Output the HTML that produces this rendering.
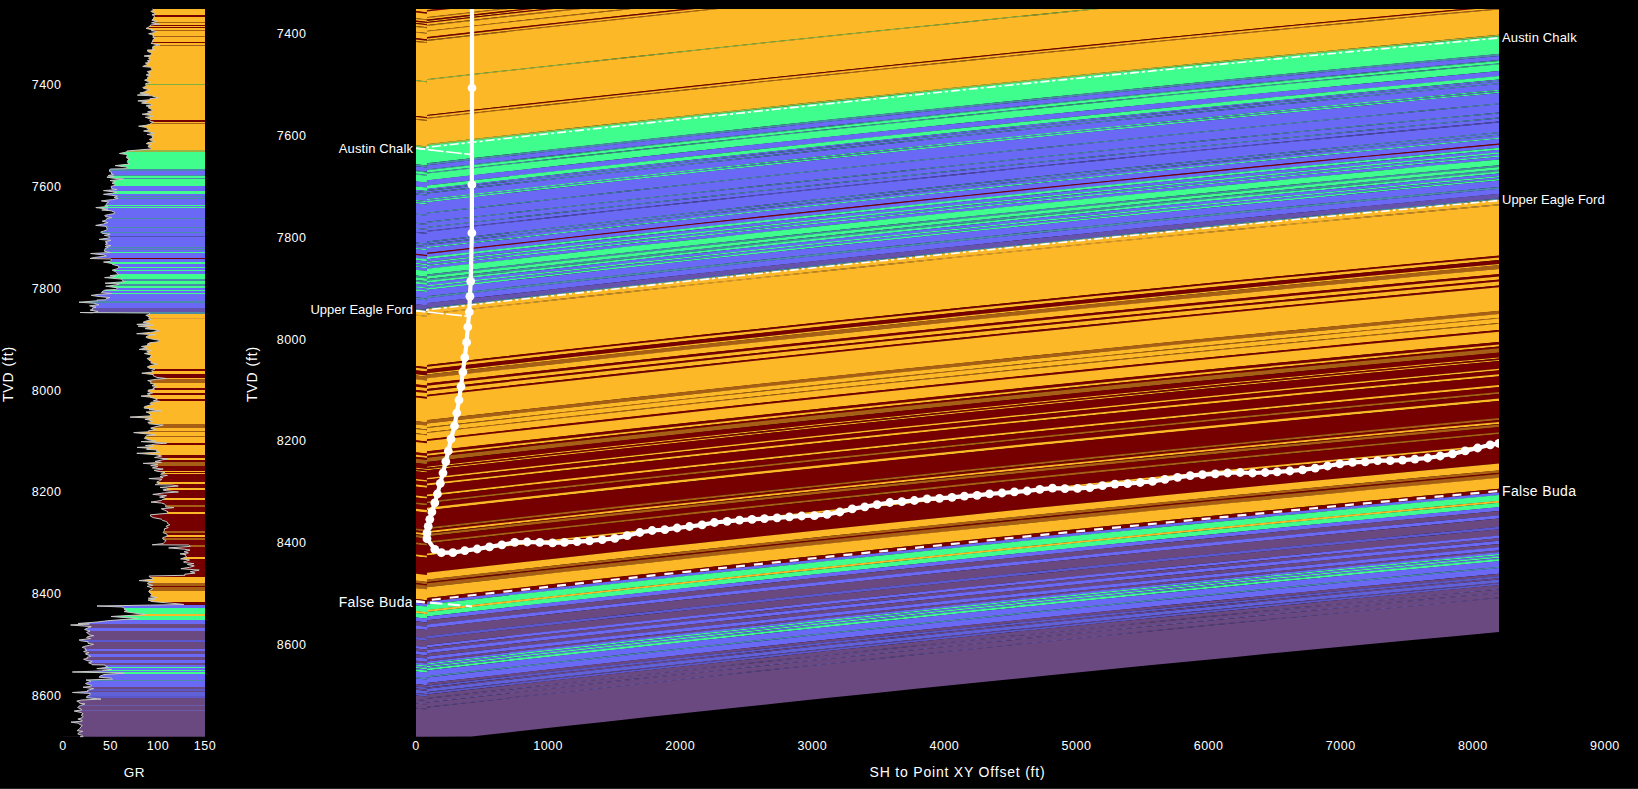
<!DOCTYPE html>
<html><head><meta charset="utf-8"><style>
html,body{margin:0;padding:0;background:#000;width:1638px;height:789px;overflow:hidden}
svg{position:absolute;left:0;top:0;display:block}
text{font-family:"Liberation Sans", sans-serif;fill:#fff}
</style></head><body>
<svg width="1638" height="789" viewBox="0 0 1638 789">
<rect x="0" y="0" width="1638" height="789" fill="#000"/>
<defs><clipPath id="cl"><rect x="63" y="9" width="142" height="727.7"/></clipPath>
<clipPath id="cm"><path d="M416,9 L1499,9 L1499,632.1 L1454.3,636.2 L1409.7,640.3 L1365,644.5 L1320.3,648.8 L1275.7,653 L1231,657.4 L1186.3,661.7 L1141.7,666.1 L1097,670.5 L1052.3,675 L1007.7,679.5 L963,684 L918.3,688.6 L873.7,693.2 L829,697.8 L784.3,702.5 L739.7,707.3 L695,712 L650.3,716.8 L605.7,721.7 L561,726.5 L516.3,731.5 L471.7,736.4 L427,736.8 L416,736.8 Z"/></clipPath></defs>
<g clip-path="url(#cl)" shape-rendering="crispEdges"><rect x="63" y="9" width="142" height="6.2" fill="#FDB827"/><rect x="63" y="15" width="142" height="1.6" fill="#760000"/><rect x="63" y="16.5" width="142" height="5.7" fill="#FDB827"/><rect x="63" y="22" width="142" height="1.1" fill="#A65F14"/><rect x="63" y="23" width="142" height="1.6" fill="#FDB827"/><rect x="63" y="24.5" width="142" height="1.5" fill="#760000"/><rect x="63" y="25.8" width="142" height="1.1" fill="#FDB827"/><rect x="63" y="26.8" width="142" height="1.3" fill="#760000"/><rect x="63" y="28" width="142" height="2" fill="#FDB827"/><rect x="63" y="29.8" width="142" height="1.3" fill="#A65F14"/><rect x="63" y="31" width="142" height="4.8" fill="#FDB827"/><rect x="63" y="35.6" width="142" height="1" fill="#A65F14"/><rect x="63" y="36.5" width="142" height="5.7" fill="#FDB827"/><rect x="63" y="42" width="142" height="1.5" fill="#760000"/><rect x="63" y="43.4" width="142" height="1.5" fill="#FDB827"/><rect x="63" y="44.8" width="142" height="1.1" fill="#A65F14"/><rect x="63" y="45.8" width="142" height="38.4" fill="#FDB827"/><rect x="63" y="84" width="142" height="1.1" fill="#7FB040"/><rect x="63" y="85" width="142" height="35.6" fill="#FDB827"/><rect x="63" y="120.4" width="142" height="1.3" fill="#760000"/><rect x="63" y="121.6" width="142" height="1.9" fill="#FDB827"/><rect x="63" y="123.3" width="142" height="1.1" fill="#A65F14"/><rect x="63" y="124.3" width="142" height="25.9" fill="#FDB827"/><rect x="63" y="150" width="142" height="1.6" fill="#A0B040"/><rect x="63" y="151.5" width="142" height="17.6" fill="#40FE8E"/><rect x="63" y="169" width="142" height="2.1" fill="#4A8CA8"/><rect x="63" y="171" width="142" height="4.2" fill="#6A69F5"/><rect x="63" y="175" width="142" height="1.1" fill="#4A8CA8"/><rect x="63" y="176" width="142" height="2.5" fill="#40FE8E"/><rect x="63" y="178.3" width="142" height="1.1" fill="#4A8CA8"/><rect x="63" y="179.3" width="142" height="6.8" fill="#40FE8E"/><rect x="63" y="186" width="142" height="5.2" fill="#6A69F5"/><rect x="63" y="191" width="142" height="3.6" fill="#40FE8E"/><rect x="63" y="194.4" width="142" height="1.2" fill="#6A69F5"/><rect x="63" y="195.5" width="142" height="1.1" fill="#4A8CA8"/><rect x="63" y="196.5" width="142" height="1.6" fill="#6A69F5"/><rect x="63" y="198" width="142" height="1.1" fill="#4A8CA8"/><rect x="63" y="199" width="142" height="5.7" fill="#6A69F5"/><rect x="63" y="204.5" width="142" height="1.1" fill="#40FE8E"/><rect x="63" y="205.5" width="142" height="1.1" fill="#6A69F5"/><rect x="63" y="206.5" width="142" height="1.3" fill="#40FE8E"/><rect x="63" y="207.7" width="142" height="10.5" fill="#6A69F5"/><rect x="63" y="218" width="142" height="1.1" fill="#4A8CA8"/><rect x="63" y="219" width="142" height="8.2" fill="#6A69F5"/><rect x="63" y="227" width="142" height="1.1" fill="#4A8CA8"/><rect x="63" y="228" width="142" height="4.2" fill="#6A69F5"/><rect x="63" y="232" width="142" height="1.1" fill="#4A8CA8"/><rect x="63" y="233" width="142" height="3.1" fill="#6A69F5"/><rect x="63" y="236" width="142" height="1.1" fill="#5050B0"/><rect x="63" y="237" width="142" height="9.7" fill="#6A69F5"/><rect x="63" y="246.5" width="142" height="1.1" fill="#4A8CA8"/><rect x="63" y="247.5" width="142" height="1.6" fill="#6A69F5"/><rect x="63" y="249" width="142" height="1.1" fill="#4A8CA8"/><rect x="63" y="250" width="142" height="2.3" fill="#6A69F5"/><rect x="63" y="252.2" width="142" height="1.1" fill="#40FE8E"/><rect x="63" y="253.2" width="142" height="5" fill="#6A69F5"/><rect x="63" y="257.8" width="142" height="1.5" fill="#760000"/><rect x="63" y="259" width="142" height="3.1" fill="#6A69F5"/><rect x="63" y="262" width="142" height="2.1" fill="#40FE8E"/><rect x="63" y="264" width="142" height="2.8" fill="#6A69F5"/><rect x="63" y="266.6" width="142" height="1.5" fill="#40FE8E"/><rect x="63" y="268" width="142" height="2" fill="#6A69F5"/><rect x="63" y="269.8" width="142" height="1.3" fill="#40FE8E"/><rect x="63" y="271" width="142" height="2.8" fill="#6A69F5"/><rect x="63" y="273.6" width="142" height="5.8" fill="#40FE8E"/><rect x="63" y="279.3" width="142" height="1.8" fill="#4A8CA8"/><rect x="63" y="281" width="142" height="2.8" fill="#40FE8E"/><rect x="63" y="283.7" width="142" height="2.1" fill="#4A8CA8"/><rect x="63" y="285.6" width="142" height="2" fill="#40FE8E"/><rect x="63" y="287.5" width="142" height="2.6" fill="#6A69F5"/><rect x="63" y="290" width="142" height="1.5" fill="#40FE8E"/><rect x="63" y="291.3" width="142" height="1.8" fill="#6A69F5"/><rect x="63" y="293" width="142" height="1.5" fill="#40FE8E"/><rect x="63" y="294.4" width="142" height="6.6" fill="#6A69F5"/><rect x="63" y="300.8" width="142" height="2" fill="#4A8CA8"/><rect x="63" y="302.7" width="142" height="5.2" fill="#6A69F5"/><rect x="63" y="307.7" width="142" height="4.7" fill="#6452AC"/><rect x="63" y="312.2" width="142" height="1.5" fill="#4A8CA8"/><rect x="63" y="313.5" width="142" height="4.7" fill="#FDB827"/><rect x="63" y="318" width="142" height="1.1" fill="#E0A030"/><rect x="63" y="319" width="142" height="50.3" fill="#FDB827"/><rect x="63" y="369.2" width="142" height="2" fill="#760000"/><rect x="63" y="371" width="142" height="2.8" fill="#FDB827"/><rect x="63" y="373.6" width="142" height="4" fill="#760000"/><rect x="63" y="377.5" width="142" height="1.3" fill="#FDB827"/><rect x="63" y="378.7" width="142" height="4" fill="#A65F14"/><rect x="63" y="382.5" width="142" height="5.3" fill="#FDB827"/><rect x="63" y="387.6" width="142" height="2.5" fill="#760000"/><rect x="63" y="390" width="142" height="3.3" fill="#FDB827"/><rect x="63" y="393.2" width="142" height="2.1" fill="#760000"/><rect x="63" y="395.1" width="142" height="4" fill="#FDB827"/><rect x="63" y="399" width="142" height="2" fill="#760000"/><rect x="63" y="400.8" width="142" height="23.6" fill="#FDB827"/><rect x="63" y="424.3" width="142" height="3.3" fill="#A65F14"/><rect x="63" y="427.5" width="142" height="4" fill="#FDB827"/><rect x="63" y="431.3" width="142" height="1" fill="#A65F14"/><rect x="63" y="432.1" width="142" height="4.3" fill="#FDB827"/><rect x="63" y="436.3" width="142" height="1" fill="#A65F14"/><rect x="63" y="437.2" width="142" height="6.3" fill="#FDB827"/><rect x="63" y="443.3" width="142" height="2" fill="#760000"/><rect x="63" y="445.2" width="142" height="10.3" fill="#FDB827"/><rect x="63" y="455.3" width="142" height="2.7" fill="#760000"/><rect x="63" y="457.9" width="142" height="2.1" fill="#FDB827"/><rect x="63" y="459.8" width="142" height="2" fill="#760000"/><rect x="63" y="461.7" width="142" height="4.5" fill="#A65F14"/><rect x="63" y="466" width="142" height="4.8" fill="#760000"/><rect x="63" y="470.7" width="142" height="1.1" fill="#FDB827"/><rect x="63" y="471.7" width="142" height="1.6" fill="#760000"/><rect x="63" y="473.2" width="142" height="1.1" fill="#FDB827"/><rect x="63" y="474.2" width="142" height="8.1" fill="#760000"/><rect x="63" y="482.1" width="142" height="1.6" fill="#FDB827"/><rect x="63" y="483.6" width="142" height="4.2" fill="#760000"/><rect x="63" y="487.6" width="142" height="2" fill="#FDB827"/><rect x="63" y="489.5" width="142" height="9" fill="#760000"/><rect x="63" y="498.4" width="142" height="2.1" fill="#FDB827"/><rect x="63" y="500.3" width="142" height="5.2" fill="#760000"/><rect x="63" y="505.3" width="142" height="2" fill="#A65F14"/><rect x="63" y="507.2" width="142" height="4.7" fill="#760000"/><rect x="63" y="511.7" width="142" height="2.7" fill="#FDB827"/><rect x="63" y="514.2" width="142" height="17.2" fill="#760000"/><rect x="63" y="531.3" width="142" height="2.1" fill="#A65F14"/><rect x="63" y="533.2" width="142" height="2" fill="#760000"/><rect x="63" y="535.1" width="142" height="2" fill="#FDB827"/><rect x="63" y="537" width="142" height="0.9" fill="#760000"/><rect x="63" y="537.7" width="142" height="2.6" fill="#A65F14"/><rect x="63" y="540.2" width="142" height="5.2" fill="#760000"/><rect x="63" y="545.3" width="142" height="2.1" fill="#A65F14"/><rect x="63" y="547.2" width="142" height="10.2" fill="#760000"/><rect x="63" y="557.3" width="142" height="2.1" fill="#FDB827"/><rect x="63" y="559.2" width="142" height="17.4" fill="#760000"/><rect x="63" y="576.5" width="142" height="6.9" fill="#FDB827"/><rect x="63" y="583.2" width="142" height="2.7" fill="#A65F14"/><rect x="63" y="585.8" width="142" height="1.4" fill="#760000"/><rect x="63" y="587" width="142" height="3.9" fill="#A65F14"/><rect x="63" y="590.8" width="142" height="11" fill="#FDB827"/><rect x="63" y="601.6" width="142" height="3.9" fill="#760000"/><rect x="63" y="605.4" width="142" height="2.8" fill="#6A69F5"/><rect x="63" y="608" width="142" height="5.9" fill="#40FE8E"/><rect x="63" y="613.7" width="142" height="2" fill="#FDB827"/><rect x="63" y="615.6" width="142" height="4.5" fill="#40FE8E"/><rect x="63" y="620" width="142" height="3.9" fill="#6A69F5"/><rect x="63" y="623.8" width="142" height="4.6" fill="#6A4880"/><rect x="63" y="628.2" width="142" height="3.3" fill="#6A69F5"/><rect x="63" y="631.4" width="142" height="8.5" fill="#6A4880"/><rect x="63" y="639.7" width="142" height="2.6" fill="#5A58D0"/><rect x="63" y="642.2" width="142" height="6.4" fill="#6A4880"/><rect x="63" y="648.5" width="142" height="2.6" fill="#6A69F5"/><rect x="63" y="651" width="142" height="2.8" fill="#6A4880"/><rect x="63" y="653.6" width="142" height="3.3" fill="#6A69F5"/><rect x="63" y="656.8" width="142" height="3.4" fill="#6A4880"/><rect x="63" y="660" width="142" height="3.4" fill="#6A69F5"/><rect x="63" y="663.2" width="142" height="1.9" fill="#6A4880"/><rect x="63" y="665" width="142" height="2.1" fill="#6A69F5"/><rect x="63" y="667" width="142" height="1.4" fill="#40FE8E"/><rect x="63" y="668.2" width="142" height="1.4" fill="#6A69F5"/><rect x="63" y="669.5" width="142" height="1.4" fill="#40FE8E"/><rect x="63" y="670.8" width="142" height="1.4" fill="#6A69F5"/><rect x="63" y="672" width="142" height="2.1" fill="#40FE8E"/><rect x="63" y="674" width="142" height="5.9" fill="#6A69F5"/><rect x="63" y="679.7" width="142" height="1.4" fill="#4A8CA8"/><rect x="63" y="681" width="142" height="5.8" fill="#6A69F5"/><rect x="63" y="686.6" width="142" height="2.5" fill="#6A4880"/><rect x="63" y="689" width="142" height="2.1" fill="#5A58C8"/><rect x="63" y="691" width="142" height="1.4" fill="#6A4880"/><rect x="63" y="692.3" width="142" height="3.4" fill="#6060D8"/><rect x="63" y="695.5" width="142" height="0.9" fill="#6A4880"/><rect x="63" y="696.2" width="142" height="1.9" fill="#5A58C8"/><rect x="63" y="698" width="142" height="3.6" fill="#6A4880"/><rect x="63" y="701.5" width="142" height="0.9" fill="#6A5AA8"/><rect x="63" y="702.3" width="142" height="3.1" fill="#6A4880"/><rect x="63" y="705.2" width="142" height="0.9" fill="#6A5AA8"/><rect x="63" y="706" width="142" height="4.4" fill="#6A4880"/><rect x="63" y="710.3" width="142" height="0.9" fill="#6A5AA8"/><rect x="63" y="711" width="142" height="25.9" fill="#6A4880"/></g>
<path d="M0,9 L152.4,9 L154.2,10.2 L150.8,11.3 L153.6,12.8 L155.8,14 L152,14.8 L154.4,15.6 L154.3,16.8 L153.7,18 L153.3,19.1 L151.8,20.2 L156.8,21.4 L151.5,22.8 L159.1,24.2 L151.1,24.9 L149.7,25.9 L148.9,27.1 L146,28.4 L153.8,30 L151.3,30.7 L156.6,31.5 L154.4,32.6 L148.6,33.7 L151.6,34.6 L154.2,36.1 L152.7,37.1 L155.3,38 L153.1,39.5 L152.7,40.8 L152.3,42.3 L151.1,43.3 L154.9,44.2 L160.1,44.9 L153.8,46.1 L152.2,47.2 L153.9,48.3 L152,49.1 L154.5,49.8 L147.4,50 L147.8,51.5 L150.3,52.5 L152,53.5 L150.9,55.1 L144.1,56 L150.2,56.7 L148.4,58.3 L150.5,59.9 L147.3,60.7 L149.7,62.3 L145.4,63 L148,64.4 L144.9,65.4 L142.7,66.5 L151.8,67.3 L151.1,68.7 L152,69.7 L151.8,70.5 L147.3,71.6 L148,72.4 L150.2,73.4 L146.2,74.9 L150.4,76 L147.5,77.2 L147.9,77.9 L147.5,79 L144.6,80.2 L148,81.4 L150.2,82.6 L145.6,83.7 L145.9,84.8 L146.3,86.3 L142.8,87.5 L143.6,88.4 L150,89.7 L147.2,90.5 L144.1,92.1 L139.8,93.1 L148.7,94.2 L137.4,95.1 L151.9,95.8 L155.2,97 L158.4,97.8 L149.9,98.7 L150.1,99.7 L137.9,100.9 L146.9,101.6 L141.6,103.1 L150.7,104.1 L152.3,105 L146.1,105.8 L150.1,106.8 L148.3,107.8 L151.1,109 L152.8,110.5 L147.5,111.9 L152,112.9 L142.2,114.2 L151.4,115.6 L153,116.3 L145.4,117.3 L148,118.1 L150.7,119.3 L149.9,120.3 L150.1,121.4 L153.6,122.1 L151.2,123.1 L150,124.3 L146,125.3 L138.6,126.2 L146.2,127.4 L146.8,128.3 L149.5,129.7 L143.6,131 L148.2,131.8 L154.6,133.1 L147.1,134.4 L154,135.7 L151.8,136.7 L153.1,138 L149.5,139.4 L151.3,140.6 L154.6,141.6 L148,142.6 L146.3,143.7 L151.4,144.5 L148.9,145.2 L148,146.8 L150.7,147.7 L151.4,148.9 L127,151 L126.6,152 L119.5,153.5 L127,154.5 L127.1,155.5 L126.9,156.3 L126.5,157.8 L129.1,159 L128,160 L127.3,161.5 L127.8,162.7 L129,164.1 L115.2,165.6 L125.9,167 L128.1,167.8 L126.5,168.7 L110.3,169 L109.5,169.9 L109.5,171.4 L112,172.5 L111.1,173.3 L113.3,174.5 L108.2,175.5 L114.3,176.3 L106.9,177.1 L111.9,178 L123.7,179.2 L110,180.5 L115.6,181.7 L112,183.2 L114.5,184 L115.6,185.3 L111,186.4 L111.7,188 L111.9,188.8 L117.1,189.6 L103.5,190.6 L116.8,192.2 L112.3,193.3 L103.5,194.3 L111.8,195.3 L117.3,196.1 L114.1,197.4 L118.1,198.3 L112.3,199.7 L108.5,200 L101.4,200.9 L108.7,202 L107.2,202.8 L106.4,204.3 L104.9,205.8 L108,206.5 L95.8,207.6 L107.9,209.1 L101.8,210 L111.2,210.8 L114.6,212.3 L114.2,213.7 L108.4,214.5 L104.7,215.5 L105.6,216.7 L111.7,217.5 L106.7,218.7 L105.7,220.3 L102.2,221.2 L107.8,222.6 L103.5,224 L95.7,225.4 L106.9,226.4 L106.4,227.9 L107.4,228.9 L106.8,230 L103.3,231.2 L100.7,232 L101.9,233.3 L110.2,234.2 L104.3,235.4 L109.2,236.3 L109.3,237.9 L99.2,239.4 L110.7,240.3 L105.2,241.8 L107.6,243.2 L105.4,244.1 L105.8,244.9 L110.9,245.7 L105.1,246.5 L108.2,247.3 L105,248.5 L104.8,249.5 L104.2,251.1 L110.3,252.6 L90.6,253.5 L103.6,254.9 L106.3,256 L94.2,257.5 L90,258.5 L111.1,259 L111.5,259.8 L110.4,261.4 L103.5,262 L112.1,263.5 L112.4,264.4 L118,265.9 L119.3,266.9 L117.8,268.3 L116.4,269 L112.2,270.2 L115.4,271.5 L116.3,272.6 L117.3,273.5 L118.7,274.6 L110,275.7 L116,276.4 L104.6,277.6 L121.7,279.1 L122.4,280.6 L124.7,281.7 L105.1,283.2 L119.3,284.1 L115.3,285.2 L105.7,286.2 L116.9,287.7 L117.4,288.6 L115.3,289.6 L105.1,290 L103,291.1 L101.4,292.6 L111.4,293.5 L98.2,294.4 L91.2,295.4 L100.6,296.7 L109.8,297.6 L106.3,298.6 L105.8,299.8 L96.9,300 L97.5,300.8 L79,302.2 L93.4,303.2 L98.9,304.7 L89.6,305.8 L96,307.2 L92.3,308.1 L92.8,309.4 L90.2,310.1 L98.1,311.5 L92.2,312.8 L80,312.5 L149.1,313 L149.9,314.3 L145.8,315.3 L147.9,316.2 L149.4,317.1 L148.6,318.5 L151.1,319.5 L147.1,320.7 L143.1,322.3 L150.1,323.4 L136.8,324.4 L153.3,325.1 L138.1,326.1 L149.6,327.4 L145.2,328.7 L153.4,329.4 L159.6,331 L150.3,332.4 L136.7,333.7 L156,334.7 L148.4,335.6 L146.1,336.8 L146.1,337.5 L150.8,338.8 L159.2,340.3 L159.1,341.7 L149.6,342.8 L147.1,344.3 L150.1,345.2 L141.5,346.5 L147,347.9 L139.2,349.4 L152,350.4 L146.8,351.3 L149.1,352.7 L144.5,353.5 L150.6,354.9 L152,355.7 L150,356.6 L151.5,357.4 L147.2,358.4 L148.7,360 L151.5,361.6 L150.8,362.9 L157.1,364.2 L150.3,365.6 L147.3,366.9 L149.4,368.3 L155,369 L151.7,370.5 L153.1,372 L141.8,373.2 L153.4,374.6 L153.3,375.8 L156.9,377.4 L166.4,378.5 L156.5,379.3 L147.7,380.6 L151.2,381.7 L150.5,383.3 L155.1,384.3 L153.4,385.1 L152.1,385.8 L156.6,386.7 L152.8,388.3 L154.6,389.2 L148.3,390 L148,391.6 L152.6,393 L147.3,393.8 L150.6,395.3 L141.1,396.1 L149.7,397.1 L154.9,398.4 L157.3,399.8 L153.4,400.7 L159.8,401.4 L151.6,402.2 L149.8,403.6 L152.7,404.4 L147.3,405.8 L144.4,406.7 L144.1,408.1 L153.8,409 L149,409.7 L161.6,410.9 L146.1,412 L149,413.1 L150.4,414.4 L150.3,415.9 L130.1,417.1 L151.7,418.1 L144.9,419.2 L150,420.3 L152.7,421.3 L147.8,422.4 L149.5,423.8 L163.2,425.1 L155.9,426.6 L150.7,428.1 L155.2,429.5 L148.3,430.9 L149,431.8 L133.7,432.6 L146.5,433.9 L155.9,434.8 L146.3,435.8 L145.6,437 L144.3,438.3 L149.1,439.8 L155.1,440.9 L141.1,441.6 L166.6,443.1 L154.8,444.1 L151.9,444.8 L145.4,445.6 L153.5,446.7 L137.2,447.4 L148.8,448.2 L146.5,449.3 L157.2,450 L156.4,451.3 L159.7,452.3 L136.8,453.3 L155.9,454.7 L161.7,456 L154.6,457.5 L167,458.9 L161.9,460 L155,461.4 L161.4,462.4 L143.2,463.4 L158,464.3 L150.7,465.6 L158,466.5 L152.4,467.9 L163.2,469.1 L154,470.4 L157.1,471.2 L164.9,472.4 L161.5,473.4 L160.8,474.7 L167.4,475.4 L160,476.6 L163.1,477.7 L148.9,478.6 L161.8,479.4 L159.3,480.9 L156.7,482.2 L159,483.4 L155.3,484.7 L171.8,485 L178.2,486 L160.1,487.4 L167.2,488.1 L168.2,489.1 L162.9,489.9 L166.2,490.7 L178.4,492 L164.4,492.9 L152.8,494.4 L166.6,495.7 L159.6,497.1 L164.6,497.9 L165.7,498.7 L162.2,499.7 L161.2,500.5 L151,502.1 L161.4,503 L164.4,504 L166.1,505.5 L165.5,506.9 L173.9,507.6 L161.3,508.8 L164.8,510.3 L168,511.7 L167.7,512.5 L166.3,513.4 L150.4,514.8 L150.5,516.1 L153.2,517.6 L161.2,519.1 L162.7,520.5 L165.4,521.2 L167.6,522.4 L167.4,523.4 L169.9,524.8 L166.4,525.9 L166.2,526.6 L168.3,527.6 L164.2,528.9 L164.6,530.1 L163.8,531.5 L163.1,532.7 L166.7,533.8 L167.2,535 L166.9,536.4 L162.8,537.6 L162.8,539 L166,540.6 L164.6,542 L163.1,543.6 L152.2,544.8 L188.7,545 L190.3,546.4 L168.7,547.9 L184.3,549.2 L190,550.1 L184.2,551.7 L188.4,552.9 L180.1,553.9 L186,554.7 L185.1,555.6 L186.7,556.9 L183.9,557.8 L180.6,558.9 L189,559.8 L189.6,560 L186.5,561.1 L183.5,562 L185.6,562.7 L193.8,563.6 L187.4,564.5 L194.3,565.9 L189.6,567.3 L180.9,568.7 L199.2,570.1 L190.2,571.7 L195.1,573.1 L184.7,574.2 L185,575.3 L149.1,576 L149.5,576.9 L151.4,577.6 L153.6,579.1 L139.1,580.6 L154.1,581.8 L147.8,582.9 L147.7,584 L152.8,585.3 L147.2,586.3 L152,587.9 L152.5,589.2 L149.9,590 L148.7,591.5 L149.9,592.9 L151.2,594 L151.9,594.8 L150.4,596.1 L156.9,597.5 L148.3,598.2 L154.9,599.1 L148,600 L152,601.5 L163,602.5 L175,603.5 L184,604.5 L97,606 L122.2,607 L124.6,608.4 L124.5,609.8 L127.1,610.6 L124.2,611.6 L130,612.5 L146,614.5 L111,616.5 L138,618.5 L110,620.5 L97,622 L78,623.5 L89.4,624 L70.6,625 L91.3,626.6 L87.6,628.1 L84.6,629.5 L90,631.1 L86.5,632.4 L88.7,633.8 L89.3,634.9 L93.7,635.7 L87.5,636.7 L86.6,637.6 L90.5,638.6 L79.1,639.9 L80.4,640.7 L88.1,641.7 L88,643.3 L93.5,644.4 L89.4,645.3 L83.5,646.6 L82.1,647.4 L85.7,648.4 L85,649.4 L86.9,650.4 L83.6,651.6 L88.8,652.6 L85.4,653.9 L89.1,655.4 L90.7,656.4 L86.9,657.4 L87.7,658.4 L83.6,659.2 L86.9,660.5 L92.2,661.5 L88.6,662.8 L91.4,663.7 L92,664.7 L105.1,665 L105.1,665.7 L108.1,667.3 L96.8,668.6 L111.5,669.4 L101.3,670.9 L72.4,672 L124.2,673.2 L103.6,674.6 L99.9,676.2 L99,677.2 L111.5,678.2 L112.5,679.1 L86,680 L90.7,681.2 L88.2,682.4 L85.5,683.5 L87.1,684.3 L91.7,685.3 L90.7,686.4 L83,687.2 L93.6,688.6 L91.2,689.4 L87.5,690.3 L87.9,691.5 L72.5,692.5 L90.2,693.4 L90.2,694.9 L86.9,696.3 L86.3,697.7 L101,699.1 L81.5,700 L76.8,701.1 L79.2,702.1 L79.6,703.2 L85,703.9 L80.5,705.4 L78.6,706.4 L77.7,707.5 L81,709 L81.6,710 L74.2,711 L81.5,712.6 L83.1,714 L81.2,715.2 L83.1,716.5 L82,717.8 L77.9,719.1 L82.1,720.3 L82.2,721.2 L71,722.1 L78.5,723.2 L79.5,724.4 L82.2,725.5 L81.1,726.8 L79.8,728.4 L79,729.3 L77.1,730.7 L82.9,731.4 L79.4,732.3 L77.7,733.8 L81.8,735.3 L83.2,736.6 L80,736.7 L0,736.7 Z" fill="#000"/>
<path d="M152.4,9 L154.2,10.2 L150.8,11.3 L153.6,12.8 L155.8,14 L152,14.8 L154.4,15.6 L154.3,16.8 L153.7,18 L153.3,19.1 L151.8,20.2 L156.8,21.4 L151.5,22.8 L159.1,24.2 L151.1,24.9 L149.7,25.9 L148.9,27.1 L146,28.4 L153.8,30 L151.3,30.7 L156.6,31.5 L154.4,32.6 L148.6,33.7 L151.6,34.6 L154.2,36.1 L152.7,37.1 L155.3,38 L153.1,39.5 L152.7,40.8 L152.3,42.3 L151.1,43.3 L154.9,44.2 L160.1,44.9 L153.8,46.1 L152.2,47.2 L153.9,48.3 L152,49.1 L154.5,49.8 L147.4,50 L147.8,51.5 L150.3,52.5 L152,53.5 L150.9,55.1 L144.1,56 L150.2,56.7 L148.4,58.3 L150.5,59.9 L147.3,60.7 L149.7,62.3 L145.4,63 L148,64.4 L144.9,65.4 L142.7,66.5 L151.8,67.3 L151.1,68.7 L152,69.7 L151.8,70.5 L147.3,71.6 L148,72.4 L150.2,73.4 L146.2,74.9 L150.4,76 L147.5,77.2 L147.9,77.9 L147.5,79 L144.6,80.2 L148,81.4 L150.2,82.6 L145.6,83.7 L145.9,84.8 L146.3,86.3 L142.8,87.5 L143.6,88.4 L150,89.7 L147.2,90.5 L144.1,92.1 L139.8,93.1 L148.7,94.2 L137.4,95.1 L151.9,95.8 L155.2,97 L158.4,97.8 L149.9,98.7 L150.1,99.7 L137.9,100.9 L146.9,101.6 L141.6,103.1 L150.7,104.1 L152.3,105 L146.1,105.8 L150.1,106.8 L148.3,107.8 L151.1,109 L152.8,110.5 L147.5,111.9 L152,112.9 L142.2,114.2 L151.4,115.6 L153,116.3 L145.4,117.3 L148,118.1 L150.7,119.3 L149.9,120.3 L150.1,121.4 L153.6,122.1 L151.2,123.1 L150,124.3 L146,125.3 L138.6,126.2 L146.2,127.4 L146.8,128.3 L149.5,129.7 L143.6,131 L148.2,131.8 L154.6,133.1 L147.1,134.4 L154,135.7 L151.8,136.7 L153.1,138 L149.5,139.4 L151.3,140.6 L154.6,141.6 L148,142.6 L146.3,143.7 L151.4,144.5 L148.9,145.2 L148,146.8 L150.7,147.7 L151.4,148.9 L127,151 L126.6,152 L119.5,153.5 L127,154.5 L127.1,155.5 L126.9,156.3 L126.5,157.8 L129.1,159 L128,160 L127.3,161.5 L127.8,162.7 L129,164.1 L115.2,165.6 L125.9,167 L128.1,167.8 L126.5,168.7 L110.3,169 L109.5,169.9 L109.5,171.4 L112,172.5 L111.1,173.3 L113.3,174.5 L108.2,175.5 L114.3,176.3 L106.9,177.1 L111.9,178 L123.7,179.2 L110,180.5 L115.6,181.7 L112,183.2 L114.5,184 L115.6,185.3 L111,186.4 L111.7,188 L111.9,188.8 L117.1,189.6 L103.5,190.6 L116.8,192.2 L112.3,193.3 L103.5,194.3 L111.8,195.3 L117.3,196.1 L114.1,197.4 L118.1,198.3 L112.3,199.7 L108.5,200 L101.4,200.9 L108.7,202 L107.2,202.8 L106.4,204.3 L104.9,205.8 L108,206.5 L95.8,207.6 L107.9,209.1 L101.8,210 L111.2,210.8 L114.6,212.3 L114.2,213.7 L108.4,214.5 L104.7,215.5 L105.6,216.7 L111.7,217.5 L106.7,218.7 L105.7,220.3 L102.2,221.2 L107.8,222.6 L103.5,224 L95.7,225.4 L106.9,226.4 L106.4,227.9 L107.4,228.9 L106.8,230 L103.3,231.2 L100.7,232 L101.9,233.3 L110.2,234.2 L104.3,235.4 L109.2,236.3 L109.3,237.9 L99.2,239.4 L110.7,240.3 L105.2,241.8 L107.6,243.2 L105.4,244.1 L105.8,244.9 L110.9,245.7 L105.1,246.5 L108.2,247.3 L105,248.5 L104.8,249.5 L104.2,251.1 L110.3,252.6 L90.6,253.5 L103.6,254.9 L106.3,256 L94.2,257.5 L90,258.5 L111.1,259 L111.5,259.8 L110.4,261.4 L103.5,262 L112.1,263.5 L112.4,264.4 L118,265.9 L119.3,266.9 L117.8,268.3 L116.4,269 L112.2,270.2 L115.4,271.5 L116.3,272.6 L117.3,273.5 L118.7,274.6 L110,275.7 L116,276.4 L104.6,277.6 L121.7,279.1 L122.4,280.6 L124.7,281.7 L105.1,283.2 L119.3,284.1 L115.3,285.2 L105.7,286.2 L116.9,287.7 L117.4,288.6 L115.3,289.6 L105.1,290 L103,291.1 L101.4,292.6 L111.4,293.5 L98.2,294.4 L91.2,295.4 L100.6,296.7 L109.8,297.6 L106.3,298.6 L105.8,299.8 L96.9,300 L97.5,300.8 L79,302.2 L93.4,303.2 L98.9,304.7 L89.6,305.8 L96,307.2 L92.3,308.1 L92.8,309.4 L90.2,310.1 L98.1,311.5 L92.2,312.8 L80,312.5 L149.1,313 L149.9,314.3 L145.8,315.3 L147.9,316.2 L149.4,317.1 L148.6,318.5 L151.1,319.5 L147.1,320.7 L143.1,322.3 L150.1,323.4 L136.8,324.4 L153.3,325.1 L138.1,326.1 L149.6,327.4 L145.2,328.7 L153.4,329.4 L159.6,331 L150.3,332.4 L136.7,333.7 L156,334.7 L148.4,335.6 L146.1,336.8 L146.1,337.5 L150.8,338.8 L159.2,340.3 L159.1,341.7 L149.6,342.8 L147.1,344.3 L150.1,345.2 L141.5,346.5 L147,347.9 L139.2,349.4 L152,350.4 L146.8,351.3 L149.1,352.7 L144.5,353.5 L150.6,354.9 L152,355.7 L150,356.6 L151.5,357.4 L147.2,358.4 L148.7,360 L151.5,361.6 L150.8,362.9 L157.1,364.2 L150.3,365.6 L147.3,366.9 L149.4,368.3 L155,369 L151.7,370.5 L153.1,372 L141.8,373.2 L153.4,374.6 L153.3,375.8 L156.9,377.4 L166.4,378.5 L156.5,379.3 L147.7,380.6 L151.2,381.7 L150.5,383.3 L155.1,384.3 L153.4,385.1 L152.1,385.8 L156.6,386.7 L152.8,388.3 L154.6,389.2 L148.3,390 L148,391.6 L152.6,393 L147.3,393.8 L150.6,395.3 L141.1,396.1 L149.7,397.1 L154.9,398.4 L157.3,399.8 L153.4,400.7 L159.8,401.4 L151.6,402.2 L149.8,403.6 L152.7,404.4 L147.3,405.8 L144.4,406.7 L144.1,408.1 L153.8,409 L149,409.7 L161.6,410.9 L146.1,412 L149,413.1 L150.4,414.4 L150.3,415.9 L130.1,417.1 L151.7,418.1 L144.9,419.2 L150,420.3 L152.7,421.3 L147.8,422.4 L149.5,423.8 L163.2,425.1 L155.9,426.6 L150.7,428.1 L155.2,429.5 L148.3,430.9 L149,431.8 L133.7,432.6 L146.5,433.9 L155.9,434.8 L146.3,435.8 L145.6,437 L144.3,438.3 L149.1,439.8 L155.1,440.9 L141.1,441.6 L166.6,443.1 L154.8,444.1 L151.9,444.8 L145.4,445.6 L153.5,446.7 L137.2,447.4 L148.8,448.2 L146.5,449.3 L157.2,450 L156.4,451.3 L159.7,452.3 L136.8,453.3 L155.9,454.7 L161.7,456 L154.6,457.5 L167,458.9 L161.9,460 L155,461.4 L161.4,462.4 L143.2,463.4 L158,464.3 L150.7,465.6 L158,466.5 L152.4,467.9 L163.2,469.1 L154,470.4 L157.1,471.2 L164.9,472.4 L161.5,473.4 L160.8,474.7 L167.4,475.4 L160,476.6 L163.1,477.7 L148.9,478.6 L161.8,479.4 L159.3,480.9 L156.7,482.2 L159,483.4 L155.3,484.7 L171.8,485 L178.2,486 L160.1,487.4 L167.2,488.1 L168.2,489.1 L162.9,489.9 L166.2,490.7 L178.4,492 L164.4,492.9 L152.8,494.4 L166.6,495.7 L159.6,497.1 L164.6,497.9 L165.7,498.7 L162.2,499.7 L161.2,500.5 L151,502.1 L161.4,503 L164.4,504 L166.1,505.5 L165.5,506.9 L173.9,507.6 L161.3,508.8 L164.8,510.3 L168,511.7 L167.7,512.5 L166.3,513.4 L150.4,514.8 L150.5,516.1 L153.2,517.6 L161.2,519.1 L162.7,520.5 L165.4,521.2 L167.6,522.4 L167.4,523.4 L169.9,524.8 L166.4,525.9 L166.2,526.6 L168.3,527.6 L164.2,528.9 L164.6,530.1 L163.8,531.5 L163.1,532.7 L166.7,533.8 L167.2,535 L166.9,536.4 L162.8,537.6 L162.8,539 L166,540.6 L164.6,542 L163.1,543.6 L152.2,544.8 L188.7,545 L190.3,546.4 L168.7,547.9 L184.3,549.2 L190,550.1 L184.2,551.7 L188.4,552.9 L180.1,553.9 L186,554.7 L185.1,555.6 L186.7,556.9 L183.9,557.8 L180.6,558.9 L189,559.8 L189.6,560 L186.5,561.1 L183.5,562 L185.6,562.7 L193.8,563.6 L187.4,564.5 L194.3,565.9 L189.6,567.3 L180.9,568.7 L199.2,570.1 L190.2,571.7 L195.1,573.1 L184.7,574.2 L185,575.3 L149.1,576 L149.5,576.9 L151.4,577.6 L153.6,579.1 L139.1,580.6 L154.1,581.8 L147.8,582.9 L147.7,584 L152.8,585.3 L147.2,586.3 L152,587.9 L152.5,589.2 L149.9,590 L148.7,591.5 L149.9,592.9 L151.2,594 L151.9,594.8 L150.4,596.1 L156.9,597.5 L148.3,598.2 L154.9,599.1 L148,600 L152,601.5 L163,602.5 L175,603.5 L184,604.5 L97,606 L122.2,607 L124.6,608.4 L124.5,609.8 L127.1,610.6 L124.2,611.6 L130,612.5 L146,614.5 L111,616.5 L138,618.5 L110,620.5 L97,622 L78,623.5 L89.4,624 L70.6,625 L91.3,626.6 L87.6,628.1 L84.6,629.5 L90,631.1 L86.5,632.4 L88.7,633.8 L89.3,634.9 L93.7,635.7 L87.5,636.7 L86.6,637.6 L90.5,638.6 L79.1,639.9 L80.4,640.7 L88.1,641.7 L88,643.3 L93.5,644.4 L89.4,645.3 L83.5,646.6 L82.1,647.4 L85.7,648.4 L85,649.4 L86.9,650.4 L83.6,651.6 L88.8,652.6 L85.4,653.9 L89.1,655.4 L90.7,656.4 L86.9,657.4 L87.7,658.4 L83.6,659.2 L86.9,660.5 L92.2,661.5 L88.6,662.8 L91.4,663.7 L92,664.7 L105.1,665 L105.1,665.7 L108.1,667.3 L96.8,668.6 L111.5,669.4 L101.3,670.9 L72.4,672 L124.2,673.2 L103.6,674.6 L99.9,676.2 L99,677.2 L111.5,678.2 L112.5,679.1 L86,680 L90.7,681.2 L88.2,682.4 L85.5,683.5 L87.1,684.3 L91.7,685.3 L90.7,686.4 L83,687.2 L93.6,688.6 L91.2,689.4 L87.5,690.3 L87.9,691.5 L72.5,692.5 L90.2,693.4 L90.2,694.9 L86.9,696.3 L86.3,697.7 L101,699.1 L81.5,700 L76.8,701.1 L79.2,702.1 L79.6,703.2 L85,703.9 L80.5,705.4 L78.6,706.4 L77.7,707.5 L81,709 L81.6,710 L74.2,711 L81.5,712.6 L83.1,714 L81.2,715.2 L83.1,716.5 L82,717.8 L77.9,719.1 L82.1,720.3 L82.2,721.2 L71,722.1 L78.5,723.2 L79.5,724.4 L82.2,725.5 L81.1,726.8 L79.8,728.4 L79,729.3 L77.1,730.7 L82.9,731.4 L79.4,732.3 L77.7,733.8 L81.8,735.3 L83.2,736.6 L80,736.7" stroke="#c8c8c8" stroke-width="1" fill="none"/>
<g clip-path="url(#cm)"><path d="M416,-200 L426.9,-198.8 L427,-201 L494,-208.5 L561,-215.9 L628,-223.2 L695,-230.4 L762,-237.5 L829,-244.6 L896,-251.5 L963,-258.4 L1030,-265.2 L1097,-271.9 L1164,-278.5 L1231,-285 L1298,-291.5 L1365,-297.9 L1432,-304.1 L1499,-310.3 L1499,-99.1 L1432,-92.9 L1365,-86.6 L1298,-80.2 L1231,-73.8 L1164,-67.3 L1097,-60.6 L1030,-53.9 L963,-47.1 L896,-40.3 L829,-33.3 L762,-26.3 L695,-19.1 L628,-11.9 L561,-4.6 L494,2.8 L427,10.2 L426.9,12.4 L416,11.2Z" fill="#FDB827"/><path d="M416,11.1 L426.9,12.3 L427,10.1 L494,2.6 L561,-4.8 L628,-12.1 L695,-19.3 L762,-26.4 L829,-33.5 L896,-40.4 L963,-47.3 L1030,-54.1 L1097,-60.8 L1164,-67.4 L1231,-73.9 L1298,-80.4 L1365,-86.8 L1432,-93 L1499,-99.2 L1499,-97.6 L1432,-91.4 L1365,-85.1 L1298,-78.7 L1231,-72.3 L1164,-65.8 L1097,-59.1 L1030,-52.4 L963,-45.6 L896,-38.8 L829,-31.8 L762,-24.8 L695,-17.6 L628,-10.4 L561,-3.1 L494,4.3 L427,11.8 L426.9,13.9 L416,12.8Z" fill="#760000"/><path d="M416,12.6 L426.9,13.8 L427,11.6 L494,4.1 L561,-3.3 L628,-10.6 L695,-17.8 L762,-24.9 L829,-32 L896,-38.9 L963,-45.8 L1030,-52.6 L1097,-59.3 L1164,-65.9 L1231,-72.4 L1298,-78.9 L1365,-85.3 L1432,-91.5 L1499,-97.7 L1499,-92.1 L1432,-85.9 L1365,-79.6 L1298,-73.2 L1231,-66.8 L1164,-60.3 L1097,-53.6 L1030,-46.9 L963,-40.1 L896,-33.3 L829,-26.3 L762,-19.3 L695,-12.1 L628,-4.9 L561,2.4 L494,9.8 L427,17.2 L426.9,19.4 L416,18.2Z" fill="#FDB827"/><path d="M416,18.1 L426.9,19.3 L427,17.1 L494,9.6 L561,2.2 L628,-5.1 L695,-12.3 L762,-19.4 L829,-26.5 L896,-33.4 L963,-40.3 L1030,-47.1 L1097,-53.8 L1164,-60.4 L1231,-66.9 L1298,-73.4 L1365,-79.8 L1432,-86 L1499,-92.2 L1499,-91.1 L1432,-84.9 L1365,-78.6 L1298,-72.2 L1231,-65.8 L1164,-59.3 L1097,-52.6 L1030,-45.9 L963,-39.1 L896,-32.3 L829,-25.3 L762,-18.3 L695,-11.1 L628,-3.9 L561,3.4 L494,10.8 L427,18.2 L426.9,20.4 L416,19.2Z" fill="#A65F14"/><path d="M416,19.1 L426.9,20.3 L427,18.1 L494,10.6 L561,3.2 L628,-4.1 L695,-11.3 L762,-18.4 L829,-25.5 L896,-32.4 L963,-39.3 L1030,-46.1 L1097,-52.8 L1164,-59.4 L1231,-65.9 L1298,-72.4 L1365,-78.8 L1432,-85 L1499,-91.2 L1499,-89.6 L1432,-83.4 L1365,-77.1 L1298,-70.7 L1231,-64.3 L1164,-57.8 L1097,-51.1 L1030,-44.4 L963,-37.6 L896,-30.8 L829,-23.8 L762,-16.8 L695,-9.6 L628,-2.4 L561,4.9 L494,12.3 L427,19.8 L426.9,21.9 L416,20.8Z" fill="#FDB827"/><path d="M416,20.6 L426.9,21.8 L427,19.6 L494,12.1 L561,4.7 L628,-2.6 L695,-9.8 L762,-16.9 L829,-24 L896,-30.9 L963,-37.8 L1030,-44.6 L1097,-51.3 L1164,-57.9 L1231,-64.4 L1298,-70.9 L1365,-77.3 L1432,-83.5 L1499,-89.7 L1499,-88.3 L1432,-82.1 L1365,-75.8 L1298,-69.4 L1231,-63 L1164,-56.5 L1097,-49.8 L1030,-43.1 L963,-36.3 L896,-29.5 L829,-22.5 L762,-15.5 L695,-8.3 L628,-1.1 L561,6.2 L494,13.6 L427,21.1 L426.9,23.2 L416,22.1Z" fill="#760000"/><path d="M416,21.9 L426.9,23.1 L427,20.9 L494,13.4 L561,6 L628,-1.3 L695,-8.5 L762,-15.6 L829,-22.7 L896,-29.6 L963,-36.5 L1030,-43.3 L1097,-50 L1164,-56.6 L1231,-63.1 L1298,-69.6 L1365,-76 L1432,-82.2 L1499,-88.4 L1499,-87.3 L1432,-81.1 L1365,-74.8 L1298,-68.4 L1231,-62 L1164,-55.5 L1097,-48.8 L1030,-42.1 L963,-35.3 L896,-28.5 L829,-21.5 L762,-14.5 L695,-7.3 L628,-0.1 L561,7.2 L494,14.6 L427,22.1 L426.9,24.2 L416,23.1Z" fill="#FDB827"/><path d="M416,22.9 L426.9,24.1 L427,21.9 L494,14.4 L561,7 L628,-0.3 L695,-7.5 L762,-14.6 L829,-21.7 L896,-28.6 L963,-35.5 L1030,-42.3 L1097,-49 L1164,-55.6 L1231,-62.1 L1298,-68.6 L1365,-75 L1432,-81.2 L1499,-87.4 L1499,-86.1 L1432,-79.9 L1365,-73.6 L1298,-67.2 L1231,-60.8 L1164,-54.3 L1097,-47.6 L1030,-40.9 L963,-34.1 L896,-27.3 L829,-20.3 L762,-13.3 L695,-6.1 L628,1.1 L561,8.4 L494,15.8 L427,23.2 L426.9,25.4 L416,24.2Z" fill="#760000"/><path d="M416,24.1 L426.9,25.3 L427,23.1 L494,15.6 L561,8.2 L628,0.9 L695,-6.3 L762,-13.4 L829,-20.5 L896,-27.4 L963,-34.3 L1030,-41.1 L1097,-47.8 L1164,-54.4 L1231,-60.9 L1298,-67.4 L1365,-73.8 L1432,-80 L1499,-86.2 L1499,-84.3 L1432,-78.1 L1365,-71.8 L1298,-65.4 L1231,-59 L1164,-52.5 L1097,-45.8 L1030,-39.1 L963,-32.3 L896,-25.5 L829,-18.5 L762,-11.5 L695,-4.3 L628,2.9 L561,10.2 L494,17.6 L427,25.1 L426.9,27.2 L416,26.1Z" fill="#FDB827"/><path d="M416,25.9 L426.9,27.1 L427,24.9 L494,17.4 L561,10 L628,2.7 L695,-4.5 L762,-11.6 L829,-18.7 L896,-25.6 L963,-32.5 L1030,-39.3 L1097,-46 L1164,-52.6 L1231,-59.1 L1298,-65.6 L1365,-72 L1432,-78.2 L1499,-84.4 L1499,-83.1 L1432,-76.9 L1365,-70.6 L1298,-64.2 L1231,-57.8 L1164,-51.3 L1097,-44.6 L1030,-37.9 L963,-31.1 L896,-24.3 L829,-17.3 L762,-10.3 L695,-3.1 L628,4.1 L561,11.4 L494,18.8 L427,26.2 L426.9,28.4 L416,27.2Z" fill="#A65F14"/><path d="M416,27.1 L426.9,28.3 L427,26.1 L494,18.6 L561,11.2 L628,3.9 L695,-3.3 L762,-10.4 L829,-17.5 L896,-24.4 L963,-31.3 L1030,-38.1 L1097,-44.8 L1164,-51.4 L1231,-57.9 L1298,-64.4 L1365,-70.8 L1432,-77 L1499,-83.2 L1499,-78.5 L1432,-72.3 L1365,-66 L1298,-59.6 L1231,-53.2 L1164,-46.7 L1097,-40 L1030,-33.3 L963,-26.5 L896,-19.7 L829,-12.7 L762,-5.7 L695,1.5 L628,8.7 L561,16 L494,23.4 L427,30.9 L426.9,33 L416,31.9Z" fill="#FDB827"/><path d="M416,31.7 L426.9,32.9 L427,30.7 L494,23.2 L561,15.8 L628,8.5 L695,1.3 L762,-5.8 L829,-12.9 L896,-19.8 L963,-26.7 L1030,-33.5 L1097,-40.2 L1164,-46.8 L1231,-53.3 L1298,-59.8 L1365,-66.2 L1432,-72.4 L1499,-78.6 L1499,-77.6 L1432,-71.4 L1365,-65.1 L1298,-58.7 L1231,-52.3 L1164,-45.8 L1097,-39.1 L1030,-32.4 L963,-25.6 L896,-18.8 L829,-11.8 L762,-4.8 L695,2.4 L628,9.6 L561,16.9 L494,24.3 L427,31.8 L426.9,33.9 L416,32.8Z" fill="#A65F14"/><path d="M416,32.6 L426.9,33.8 L427,31.6 L494,24.1 L561,16.7 L628,9.4 L695,2.2 L762,-4.9 L829,-12 L896,-18.9 L963,-25.8 L1030,-32.6 L1097,-39.3 L1164,-45.9 L1231,-52.4 L1298,-58.9 L1365,-65.3 L1432,-71.5 L1499,-77.7 L1499,-72.1 L1432,-65.9 L1365,-59.6 L1298,-53.2 L1231,-46.8 L1164,-40.3 L1097,-33.6 L1030,-26.9 L963,-20.1 L896,-13.3 L829,-6.3 L762,0.7 L695,7.9 L628,15.1 L561,22.4 L494,29.8 L427,37.2 L426.9,39.4 L416,38.2Z" fill="#FDB827"/><path d="M416,38.1 L426.9,39.3 L427,37.1 L494,29.6 L561,22.2 L628,14.9 L695,7.7 L762,0.6 L829,-6.5 L896,-13.4 L963,-20.3 L1030,-27.1 L1097,-33.8 L1164,-40.4 L1231,-46.9 L1298,-53.4 L1365,-59.8 L1432,-66 L1499,-72.2 L1499,-70.7 L1432,-64.5 L1365,-58.2 L1298,-51.8 L1231,-45.4 L1164,-38.9 L1097,-32.2 L1030,-25.5 L963,-18.7 L896,-11.9 L829,-4.9 L762,2.1 L695,9.3 L628,16.5 L561,23.8 L494,31.2 L427,38.6 L426.9,40.8 L416,39.6Z" fill="#760000"/><path d="M416,39.5 L426.9,40.7 L427,38.5 L494,31 L561,23.6 L628,16.3 L695,9.1 L762,2 L829,-5.1 L896,-12 L963,-18.9 L1030,-25.7 L1097,-32.4 L1164,-39 L1231,-45.5 L1298,-52 L1365,-58.4 L1432,-64.6 L1499,-70.8 L1499,-69.3 L1432,-63.1 L1365,-56.8 L1298,-50.4 L1231,-44 L1164,-37.5 L1097,-30.8 L1030,-24.1 L963,-17.3 L896,-10.5 L829,-3.5 L762,3.5 L695,10.7 L628,17.9 L561,25.2 L494,32.6 L427,40 L426.9,42.2 L416,41Z" fill="#FDB827"/><path d="M416,40.9 L426.9,42.1 L427,39.9 L494,32.4 L561,25 L628,17.7 L695,10.5 L762,3.4 L829,-3.7 L896,-10.6 L963,-17.5 L1030,-24.3 L1097,-31 L1164,-37.6 L1231,-44.1 L1298,-50.6 L1365,-57 L1432,-63.2 L1499,-69.4 L1499,-68.3 L1432,-62.1 L1365,-55.8 L1298,-49.4 L1231,-43 L1164,-36.5 L1097,-29.8 L1030,-23.1 L963,-16.3 L896,-9.5 L829,-2.5 L762,4.5 L695,11.7 L628,18.9 L561,26.2 L494,33.6 L427,41 L426.9,43.2 L416,42Z" fill="#A65F14"/><path d="M416,41.9 L426.9,43.1 L427,40.9 L494,33.4 L561,26 L628,18.7 L695,11.5 L762,4.4 L829,-2.7 L896,-9.6 L963,-16.5 L1030,-23.3 L1097,-30 L1164,-36.6 L1231,-43.1 L1298,-49.6 L1365,-56 L1432,-62.2 L1499,-68.4 L1499,-30.1 L1432,-23.9 L1365,-17.6 L1298,-11.2 L1231,-4.8 L1164,1.7 L1097,8.4 L1030,15.1 L963,21.9 L896,28.7 L829,35.7 L762,42.7 L695,49.9 L628,57.1 L561,64.4 L494,71.8 L427,79.2 L426.9,81.4 L416,80.2Z" fill="#FDB827"/><path d="M416,80.1 L426.9,81.3 L427,79.1 L494,71.6 L561,64.2 L628,56.9 L695,49.7 L762,42.6 L829,35.5 L896,28.6 L963,21.7 L1030,14.9 L1097,8.2 L1164,1.6 L1231,-4.9 L1298,-11.4 L1365,-17.8 L1432,-24 L1499,-30.2 L1499,-29.1 L1432,-22.9 L1365,-16.6 L1298,-10.2 L1231,-3.8 L1164,2.7 L1097,9.4 L1030,16.1 L963,22.8 L896,29.7 L829,36.7 L762,43.7 L695,50.9 L628,58.1 L561,65.4 L494,72.8 L427,80.2 L426.9,82.4 L416,81.2Z" fill="#7FB040"/><path d="M416,81.1 L426.9,82.3 L427,80.1 L494,72.6 L561,65.2 L628,57.9 L695,50.7 L762,43.6 L829,36.5 L896,29.6 L963,22.7 L1030,15.9 L1097,9.2 L1164,2.6 L1231,-4 L1298,-10.4 L1365,-16.8 L1432,-23 L1499,-29.2 L1499,5.7 L1432,11.9 L1365,18.2 L1298,24.6 L1231,31 L1164,37.6 L1097,44.2 L1030,50.9 L963,57.7 L896,64.5 L829,71.5 L762,78.6 L695,85.7 L628,92.9 L561,100.2 L494,107.6 L427,115.1 L426.9,117.3 L416,116.1Z" fill="#FDB827"/><path d="M416,115.9 L426.9,117.1 L427,114.9 L494,107.4 L561,100.1 L628,92.7 L695,85.5 L762,78.4 L829,71.4 L896,64.4 L963,57.5 L1030,50.7 L1097,44 L1164,37.4 L1231,30.9 L1298,24.4 L1365,18.1 L1432,11.8 L1499,5.6 L1499,6.9 L1432,13.1 L1365,19.4 L1298,25.7 L1231,32.2 L1164,38.7 L1097,45.4 L1030,52.1 L963,58.8 L896,65.7 L829,72.7 L762,79.7 L695,86.9 L628,94.1 L561,101.4 L494,108.8 L427,116.2 L426.9,118.4 L416,117.2Z" fill="#760000"/><path d="M416,117.1 L426.9,118.3 L427,116.1 L494,108.6 L561,101.2 L628,93.9 L695,86.7 L762,79.6 L829,72.5 L896,65.6 L963,58.7 L1030,51.9 L1097,45.2 L1164,38.6 L1231,32 L1298,25.6 L1365,19.2 L1432,13 L1499,6.8 L1499,8.6 L1432,14.8 L1365,21.1 L1298,27.4 L1231,33.9 L1164,40.4 L1097,47 L1030,53.7 L963,60.5 L896,67.4 L829,74.4 L762,81.4 L695,88.5 L628,95.8 L561,103.1 L494,110.4 L427,117.9 L426.9,120.1 L416,118.9Z" fill="#FDB827"/><path d="M416,118.8 L426.9,120 L427,117.8 L494,110.3 L561,102.9 L628,95.6 L695,88.4 L762,81.3 L829,74.2 L896,67.2 L963,60.4 L1030,53.6 L1097,46.9 L1164,40.3 L1231,33.7 L1298,27.3 L1365,20.9 L1432,14.6 L1499,8.4 L1499,9.6 L1432,15.8 L1365,22 L1298,28.4 L1231,34.9 L1164,41.4 L1097,48 L1030,54.7 L963,61.5 L896,68.4 L829,75.3 L762,82.4 L695,89.5 L628,96.7 L561,104 L494,111.4 L427,118.9 L426.9,121.1 L416,119.9Z" fill="#A65F14"/><path d="M416,119.7 L426.9,120.9 L427,118.7 L494,111.3 L561,103.9 L628,96.6 L695,89.4 L762,82.2 L829,75.2 L896,68.2 L963,61.4 L1030,54.6 L1097,47.9 L1164,41.2 L1231,34.7 L1298,28.3 L1365,21.9 L1432,15.6 L1499,9.4 L1499,34.8 L1432,41 L1365,47.3 L1298,53.7 L1231,60.1 L1164,66.7 L1097,73.3 L1030,80 L963,86.8 L896,93.7 L829,100.6 L762,107.7 L695,114.8 L628,122 L561,129.3 L494,136.7 L427,144.2 L426.9,146.4 L416,145.2Z" fill="#FDB827"/><path d="M416,145 L426.9,146.2 L427,144 L494,136.6 L561,129.2 L628,121.9 L695,114.6 L762,107.5 L829,100.5 L896,93.5 L963,86.6 L1030,79.8 L1097,73.1 L1164,66.5 L1231,60 L1298,53.5 L1365,47.2 L1432,40.9 L1499,34.7 L1499,36.3 L1432,42.5 L1365,48.8 L1298,55.2 L1231,61.6 L1164,68.1 L1097,74.8 L1030,81.5 L963,88.3 L896,95.1 L829,102.1 L762,109.1 L695,116.3 L628,123.5 L561,130.8 L494,138.2 L427,145.7 L426.9,147.8 L416,146.7Z" fill="#A0B040"/><path d="M416,146.5 L426.9,147.7 L427,145.5 L494,138 L561,130.6 L628,123.3 L695,116.1 L762,109 L829,101.9 L896,95 L963,88.1 L1030,81.3 L1097,74.6 L1164,68 L1231,61.5 L1298,55 L1365,48.6 L1432,42.4 L1499,36.2 L1499,54 L1432,60.2 L1365,66.5 L1298,72.8 L1231,79.3 L1164,85.8 L1097,92.4 L1030,99.1 L963,105.9 L896,112.8 L829,119.8 L762,126.8 L695,133.9 L628,141.2 L561,148.5 L494,155.8 L427,163.3 L426.9,165.5 L416,164.3Z" fill="#40FE8E"/><path d="M416,164.2 L426.9,165.4 L427,163.2 L494,155.7 L561,148.3 L628,141 L695,133.8 L762,126.7 L829,119.6 L896,112.6 L963,105.8 L1030,99 L1097,92.3 L1164,85.7 L1231,79.1 L1298,72.7 L1365,66.3 L1432,60 L1499,53.8 L1499,56 L1432,62.2 L1365,68.5 L1298,74.8 L1231,81.3 L1164,87.8 L1097,94.4 L1030,101.1 L963,107.9 L896,114.8 L829,121.8 L762,128.8 L695,136 L628,143.2 L561,150.5 L494,157.9 L427,165.3 L426.9,167.5 L416,166.3Z" fill="#4A8CA8"/><path d="M416,166.2 L426.9,167.4 L427,165.2 L494,157.7 L561,150.3 L628,143 L695,135.8 L762,128.7 L829,121.6 L896,114.7 L963,107.8 L1030,101 L1097,94.3 L1164,87.7 L1231,81.1 L1298,74.7 L1365,68.3 L1432,62 L1499,55.9 L1499,60 L1432,66.2 L1365,72.5 L1298,78.9 L1231,85.3 L1164,91.9 L1097,98.5 L1030,105.2 L963,112 L896,118.9 L829,125.8 L762,132.9 L695,140 L628,147.2 L561,154.5 L494,161.9 L427,169.4 L426.9,171.6 L416,170.4Z" fill="#6A69F5"/><path d="M416,170.2 L426.9,171.4 L427,169.2 L494,161.7 L561,154.4 L628,147.1 L695,139.8 L762,132.7 L829,125.7 L896,118.7 L963,111.8 L1030,105 L1097,98.3 L1164,91.7 L1231,85.2 L1298,78.7 L1365,72.4 L1432,66.1 L1499,59.9 L1499,61.1 L1432,67.2 L1365,73.5 L1298,79.9 L1231,86.3 L1164,92.9 L1097,99.5 L1030,106.2 L963,113 L896,119.9 L829,126.8 L762,133.9 L695,141 L628,148.2 L561,155.5 L494,162.9 L427,170.4 L426.9,172.6 L416,171.4Z" fill="#4A8CA8"/><path d="M416,171.2 L426.9,172.4 L427,170.2 L494,162.8 L561,155.4 L628,148.1 L695,140.8 L762,133.7 L829,126.7 L896,119.7 L963,112.8 L1030,106 L1097,99.3 L1164,92.7 L1231,86.2 L1298,79.7 L1365,73.4 L1432,67.1 L1499,60.9 L1499,63.4 L1432,69.6 L1365,75.8 L1298,82.2 L1231,88.7 L1164,95.2 L1097,101.8 L1030,108.5 L963,115.3 L896,122.2 L829,129.1 L762,136.2 L695,143.3 L628,150.5 L561,157.8 L494,165.2 L427,172.7 L426.9,174.9 L416,173.7Z" fill="#40FE8E"/><path d="M416,173.5 L426.9,174.7 L427,172.5 L494,165.1 L561,157.7 L628,150.4 L695,143.2 L762,136 L829,129 L896,122 L963,115.2 L1030,108.4 L1097,101.7 L1164,95 L1231,88.5 L1298,82.1 L1365,75.7 L1432,69.4 L1499,63.2 L1499,64.4 L1432,70.6 L1365,76.9 L1298,83.2 L1231,89.7 L1164,96.2 L1097,102.8 L1030,109.5 L963,116.3 L896,123.2 L829,130.2 L762,137.2 L695,144.3 L628,151.5 L561,158.8 L494,166.2 L427,173.7 L426.9,175.9 L416,174.7Z" fill="#4A8CA8"/><path d="M416,174.6 L426.9,175.8 L427,173.6 L494,166.1 L561,158.7 L628,151.4 L695,144.2 L762,137 L829,130 L896,123 L963,116.2 L1030,109.4 L1097,102.7 L1164,96 L1231,89.5 L1298,83.1 L1365,76.7 L1432,70.4 L1499,64.2 L1499,71.1 L1432,77.3 L1365,83.6 L1298,90 L1231,96.4 L1164,103 L1097,109.6 L1030,116.3 L963,123.1 L896,130 L829,136.9 L762,144 L695,151.1 L628,158.3 L561,165.6 L494,173 L427,180.5 L426.9,182.7 L416,181.5Z" fill="#40FE8E"/><path d="M416,181.3 L426.9,182.5 L427,180.3 L494,172.8 L561,165.5 L628,158.2 L695,150.9 L762,143.8 L829,136.8 L896,129.8 L963,122.9 L1030,116.1 L1097,109.4 L1164,102.8 L1231,96.3 L1298,89.8 L1365,83.5 L1432,77.2 L1499,71 L1499,76.2 L1432,82.4 L1365,88.7 L1298,95 L1231,101.5 L1164,108 L1097,114.6 L1030,121.3 L963,128.1 L896,135 L829,142 L762,149 L695,156.1 L628,163.4 L561,170.7 L494,178 L427,185.5 L426.9,187.7 L416,186.5Z" fill="#6A69F5"/><path d="M416,186.4 L426.9,187.6 L427,185.4 L494,177.9 L561,170.5 L628,163.2 L695,156 L762,148.9 L829,141.8 L896,134.8 L963,128 L1030,121.2 L1097,114.5 L1164,107.9 L1231,101.3 L1298,94.9 L1365,88.5 L1432,82.2 L1499,76 L1499,79.6 L1432,85.8 L1365,92.1 L1298,98.5 L1231,104.9 L1164,111.4 L1097,118.1 L1030,124.8 L963,131.6 L896,138.4 L829,145.4 L762,152.4 L695,159.6 L628,166.8 L561,174.1 L494,181.5 L427,188.9 L426.9,191.1 L416,189.9Z" fill="#40FE8E"/><path d="M416,189.8 L426.9,191 L427,188.8 L494,181.3 L561,173.9 L628,166.6 L695,159.4 L762,152.3 L829,145.2 L896,138.3 L963,131.4 L1030,124.6 L1097,117.9 L1164,111.3 L1231,104.8 L1298,98.3 L1365,91.9 L1432,85.7 L1499,79.5 L1499,80.7 L1432,86.9 L1365,93.2 L1298,99.6 L1231,106 L1164,112.5 L1097,119.2 L1030,125.9 L963,132.7 L896,139.5 L829,146.5 L762,153.5 L695,160.7 L628,167.9 L561,175.2 L494,182.6 L427,190.1 L426.9,192.3 L416,191.1Z" fill="#6A69F5"/><path d="M416,190.9 L426.9,192.1 L427,189.9 L494,182.4 L561,175 L628,167.7 L695,160.5 L762,153.4 L829,146.4 L896,139.4 L963,132.5 L1030,125.7 L1097,119 L1164,112.4 L1231,105.9 L1298,99.4 L1365,93.1 L1432,86.8 L1499,80.6 L1499,81.7 L1432,87.9 L1365,94.2 L1298,100.6 L1231,107 L1164,113.6 L1097,120.2 L1030,126.9 L963,133.7 L896,140.5 L829,147.5 L762,154.6 L695,161.7 L628,168.9 L561,176.2 L494,183.6 L427,191.1 L426.9,193.3 L416,192.1Z" fill="#4A8CA8"/><path d="M416,191.9 L426.9,193.1 L427,190.9 L494,183.4 L561,176.1 L628,168.8 L695,161.5 L762,154.4 L829,147.4 L896,140.4 L963,133.5 L1030,126.7 L1097,120 L1164,113.4 L1231,106.9 L1298,100.4 L1365,94.1 L1432,87.8 L1499,81.6 L1499,83.3 L1432,89.4 L1365,95.7 L1298,102.1 L1231,108.5 L1164,115.1 L1097,121.7 L1030,128.4 L963,135.2 L896,142.1 L829,149 L762,156.1 L695,163.2 L628,170.4 L561,177.7 L494,185.1 L427,192.6 L426.9,194.8 L416,193.6Z" fill="#6A69F5"/><path d="M416,193.4 L426.9,194.6 L427,192.4 L494,185 L561,177.6 L628,170.3 L695,163.1 L762,155.9 L829,148.9 L896,141.9 L963,135 L1030,128.2 L1097,121.5 L1164,114.9 L1231,108.4 L1298,101.9 L1365,95.6 L1432,89.3 L1499,83.1 L1499,84.3 L1432,90.5 L1365,96.7 L1298,103.1 L1231,109.5 L1164,116.1 L1097,122.7 L1030,129.4 L963,136.2 L896,143.1 L829,150 L762,157.1 L695,164.2 L628,171.4 L561,178.7 L494,186.1 L427,193.6 L426.9,195.8 L416,194.6Z" fill="#4A8CA8"/><path d="M416,194.4 L426.9,195.6 L427,193.4 L494,186 L561,178.6 L628,171.3 L695,164.1 L762,156.9 L829,149.9 L896,142.9 L963,136 L1030,129.3 L1097,122.6 L1164,115.9 L1231,109.4 L1298,102.9 L1365,96.6 L1432,90.3 L1499,84.1 L1499,89.8 L1432,96 L1365,102.3 L1298,108.6 L1231,115.1 L1164,121.6 L1097,128.3 L1030,135 L963,141.7 L896,148.6 L829,155.6 L762,162.6 L695,169.8 L628,177 L561,184.3 L494,191.7 L427,199.1 L426.9,201.3 L416,200.1Z" fill="#6A69F5"/><path d="M416,200 L426.9,201.2 L427,199 L494,191.5 L561,184.1 L628,176.8 L695,169.6 L762,162.5 L829,155.4 L896,148.5 L963,141.6 L1030,134.8 L1097,128.1 L1164,121.5 L1231,114.9 L1298,108.5 L1365,102.1 L1432,95.9 L1499,89.7 L1499,90.8 L1432,97 L1365,103.3 L1298,109.7 L1231,116.1 L1164,122.6 L1097,129.3 L1030,136 L963,142.8 L896,149.6 L829,156.6 L762,163.6 L695,170.8 L628,178 L561,185.3 L494,192.7 L427,200.2 L426.9,202.3 L416,201.2Z" fill="#40FE8E"/><path d="M416,201 L426.9,202.2 L427,200 L494,192.5 L561,185.1 L628,177.8 L695,170.6 L762,163.5 L829,156.4 L896,149.5 L963,142.6 L1030,135.8 L1097,129.1 L1164,122.5 L1231,116 L1298,109.5 L1365,103.1 L1432,96.9 L1499,90.7 L1499,91.8 L1432,98 L1365,104.3 L1298,110.7 L1231,117.1 L1164,123.7 L1097,130.3 L1030,137 L963,143.8 L896,150.6 L829,157.6 L762,164.6 L695,171.8 L628,179 L561,186.3 L494,193.7 L427,201.2 L426.9,203.4 L416,202.2Z" fill="#6A69F5"/><path d="M416,202 L426.9,203.2 L427,201 L494,193.5 L561,186.1 L628,178.8 L695,171.6 L762,164.5 L829,157.5 L896,150.5 L963,143.6 L1030,136.8 L1097,130.1 L1164,123.5 L1231,117 L1298,110.5 L1365,104.2 L1432,97.9 L1499,91.7 L1499,93 L1432,99.2 L1365,105.5 L1298,111.9 L1231,118.3 L1164,124.9 L1097,131.5 L1030,138.2 L963,145 L896,151.9 L829,158.8 L762,165.9 L695,173 L628,180.2 L561,187.5 L494,194.9 L427,202.4 L426.9,204.6 L416,203.4Z" fill="#40FE8E"/><path d="M416,203.2 L426.9,204.4 L427,202.2 L494,194.7 L561,187.4 L628,180.1 L695,172.8 L762,165.7 L829,158.7 L896,151.7 L963,144.8 L1030,138 L1097,131.3 L1164,124.7 L1231,118.2 L1298,111.7 L1365,105.4 L1432,99.1 L1499,92.9 L1499,103.4 L1432,109.6 L1365,115.9 L1298,122.3 L1231,128.7 L1164,135.3 L1097,141.9 L1030,148.6 L963,155.4 L896,162.2 L829,169.2 L762,176.3 L695,183.4 L628,190.6 L561,197.9 L494,205.3 L427,212.8 L426.9,215 L416,213.8Z" fill="#6A69F5"/><path d="M416,213.6 L426.9,214.8 L427,212.6 L494,205.1 L561,197.8 L628,190.5 L695,183.2 L762,176.1 L829,169.1 L896,162.1 L963,155.2 L1030,148.4 L1097,141.7 L1164,135.1 L1231,128.6 L1298,122.1 L1365,115.8 L1432,109.5 L1499,103.3 L1499,104.4 L1432,110.6 L1365,116.9 L1298,123.3 L1231,129.7 L1164,136.3 L1097,142.9 L1030,149.6 L963,156.4 L896,163.3 L829,170.2 L762,177.3 L695,184.4 L628,191.6 L561,198.9 L494,206.3 L427,213.8 L426.9,216 L416,214.8Z" fill="#4A8CA8"/><path d="M416,214.6 L426.9,215.8 L427,213.6 L494,206.2 L561,198.8 L628,191.5 L695,184.2 L762,177.1 L829,170.1 L896,163.1 L963,156.2 L1030,149.4 L1097,142.7 L1164,136.1 L1231,129.6 L1298,123.1 L1365,116.8 L1432,110.5 L1499,104.3 L1499,112.5 L1432,118.7 L1365,125 L1298,131.4 L1231,137.8 L1164,144.3 L1097,151 L1030,157.7 L963,164.5 L896,171.3 L829,178.3 L762,185.3 L695,192.5 L628,199.7 L561,207 L494,214.4 L427,221.8 L426.9,224 L416,222.8Z" fill="#6A69F5"/><path d="M416,222.7 L426.9,223.9 L427,221.7 L494,214.2 L561,206.8 L628,199.5 L695,192.3 L762,185.2 L829,178.1 L896,171.2 L963,164.3 L1030,157.5 L1097,150.8 L1164,144.2 L1231,137.7 L1298,131.2 L1365,124.8 L1432,118.6 L1499,112.4 L1499,113.5 L1432,119.7 L1365,126 L1298,132.4 L1231,138.8 L1164,145.4 L1097,152 L1030,158.7 L963,165.5 L896,172.3 L829,179.3 L762,186.3 L695,193.5 L628,200.7 L561,208 L494,215.4 L427,222.9 L426.9,225.1 L416,223.9Z" fill="#4A8CA8"/><path d="M416,223.7 L426.9,224.9 L427,222.7 L494,215.2 L561,207.8 L628,200.5 L695,193.3 L762,186.2 L829,179.2 L896,172.2 L963,165.3 L1030,158.5 L1097,151.8 L1164,145.2 L1231,138.7 L1298,132.2 L1365,125.9 L1432,119.6 L1499,113.4 L1499,117.6 L1432,123.8 L1365,130 L1298,136.4 L1231,142.9 L1164,149.4 L1097,156 L1030,162.7 L963,169.5 L896,176.4 L829,183.3 L762,190.4 L695,197.5 L628,204.7 L561,212 L494,219.4 L427,226.9 L426.9,229.1 L416,227.9Z" fill="#6A69F5"/><path d="M416,227.7 L426.9,228.9 L427,226.7 L494,219.3 L561,211.9 L628,204.6 L695,197.4 L762,190.2 L829,183.2 L896,176.2 L963,169.4 L1030,162.6 L1097,155.9 L1164,149.2 L1231,142.7 L1298,136.3 L1365,129.9 L1432,123.6 L1499,117.4 L1499,118.6 L1432,124.8 L1365,131 L1298,137.4 L1231,143.9 L1164,150.4 L1097,157 L1030,163.7 L963,170.5 L896,177.4 L829,184.3 L762,191.4 L695,198.5 L628,205.7 L561,213 L494,220.4 L427,227.9 L426.9,230.1 L416,228.9Z" fill="#4A8CA8"/><path d="M416,228.8 L426.9,229.9 L427,227.8 L494,220.3 L561,212.9 L628,205.6 L695,198.4 L762,191.2 L829,184.2 L896,177.2 L963,170.4 L1030,163.6 L1097,156.9 L1164,150.2 L1231,143.7 L1298,137.3 L1365,130.9 L1432,124.6 L1499,118.4 L1499,121.6 L1432,127.8 L1365,134.1 L1298,140.4 L1231,146.9 L1164,153.4 L1097,160 L1030,166.7 L963,173.5 L896,180.4 L829,187.4 L762,194.4 L695,201.6 L628,208.8 L561,216.1 L494,223.5 L427,230.9 L426.9,233.1 L416,231.9Z" fill="#6A69F5"/><path d="M416,231.8 L426.9,233 L427,230.8 L494,223.3 L561,215.9 L628,208.6 L695,201.4 L762,194.3 L829,187.2 L896,180.3 L963,173.4 L1030,166.6 L1097,159.9 L1164,153.3 L1231,146.7 L1298,140.3 L1365,133.9 L1432,127.6 L1499,121.5 L1499,122.6 L1432,128.8 L1365,135.1 L1298,141.5 L1231,147.9 L1164,154.4 L1097,161.1 L1030,167.8 L963,174.5 L896,181.4 L829,188.4 L762,195.4 L695,202.6 L628,209.8 L561,217.1 L494,224.5 L427,231.9 L426.9,234.1 L416,232.9Z" fill="#5050B0"/><path d="M416,232.8 L426.9,234 L427,231.8 L494,224.3 L561,216.9 L628,209.6 L695,202.4 L762,195.3 L829,188.2 L896,181.3 L963,174.4 L1030,167.6 L1097,160.9 L1164,154.3 L1231,147.7 L1298,141.3 L1365,134.9 L1432,128.7 L1499,122.5 L1499,132.2 L1432,138.4 L1365,144.7 L1298,151 L1231,157.5 L1164,164 L1097,170.6 L1030,177.3 L963,184.1 L896,191 L829,198 L762,205 L695,212.2 L628,219.4 L561,226.7 L494,234.1 L427,241.5 L426.9,243.7 L416,242.5Z" fill="#6A69F5"/><path d="M416,242.4 L426.9,243.6 L427,241.4 L494,233.9 L561,226.5 L628,219.2 L695,212 L762,204.9 L829,197.8 L896,190.9 L963,184 L1030,177.2 L1097,170.5 L1164,163.9 L1231,157.3 L1298,150.9 L1365,144.5 L1432,138.2 L1499,132.1 L1499,133.2 L1432,139.4 L1365,145.7 L1298,152 L1231,158.5 L1164,165 L1097,171.7 L1030,178.4 L963,185.1 L896,192 L829,199 L762,206 L695,213.2 L628,220.4 L561,227.7 L494,235.1 L427,242.5 L426.9,244.7 L416,243.5Z" fill="#4A8CA8"/><path d="M416,243.4 L426.9,244.6 L427,242.4 L494,234.9 L561,227.5 L628,220.2 L695,213 L762,205.9 L829,198.8 L896,191.9 L963,185 L1030,178.2 L1097,171.5 L1164,164.9 L1231,158.3 L1298,151.9 L1365,145.5 L1432,139.3 L1499,133.1 L1499,134.7 L1432,140.9 L1365,147.2 L1298,153.6 L1231,160 L1164,166.5 L1097,173.2 L1030,179.9 L963,186.7 L896,193.5 L829,200.5 L762,207.5 L695,214.7 L628,221.9 L561,229.2 L494,236.6 L427,244.1 L426.9,246.2 L416,245.1Z" fill="#6A69F5"/><path d="M416,244.9 L426.9,246.1 L427,243.9 L494,236.4 L561,229 L628,221.7 L695,214.5 L762,207.4 L829,200.3 L896,193.4 L963,186.5 L1030,179.7 L1097,173 L1164,166.4 L1231,159.9 L1298,153.4 L1365,147 L1432,140.8 L1499,134.6 L1499,135.7 L1432,141.9 L1365,148.2 L1298,154.6 L1231,161 L1164,167.6 L1097,174.2 L1030,180.9 L963,187.7 L896,194.5 L829,201.5 L762,208.6 L695,215.7 L628,222.9 L561,230.2 L494,237.6 L427,245.1 L426.9,247.3 L416,246.1Z" fill="#4A8CA8"/><path d="M416,245.9 L426.9,247.1 L427,244.9 L494,237.4 L561,230.1 L628,222.8 L695,215.5 L762,208.4 L829,201.4 L896,194.4 L963,187.5 L1030,180.7 L1097,174 L1164,167.4 L1231,160.9 L1298,154.4 L1365,148.1 L1432,141.8 L1499,135.6 L1499,138 L1432,144.1 L1365,150.4 L1298,156.8 L1231,163.2 L1164,169.8 L1097,176.4 L1030,183.1 L963,189.9 L896,196.8 L829,203.7 L762,210.8 L695,217.9 L628,225.1 L561,232.4 L494,239.8 L427,247.3 L426.9,249.5 L416,248.3Z" fill="#6A69F5"/><path d="M416,248.1 L426.9,249.3 L427,247.1 L494,239.7 L561,232.3 L628,225 L695,217.8 L762,210.6 L829,203.6 L896,196.6 L963,189.7 L1030,182.9 L1097,176.2 L1164,169.6 L1231,163.1 L1298,156.6 L1365,150.3 L1432,144 L1499,137.8 L1499,139 L1432,145.2 L1365,151.4 L1298,157.8 L1231,164.2 L1164,170.8 L1097,177.4 L1030,184.1 L963,190.9 L896,197.8 L829,204.7 L762,211.8 L695,218.9 L628,226.1 L561,233.4 L494,240.8 L427,248.3 L426.9,250.5 L416,249.3Z" fill="#40FE8E"/><path d="M416,249.1 L426.9,250.3 L427,248.1 L494,240.7 L561,233.3 L628,226 L695,218.8 L762,211.6 L829,204.6 L896,197.6 L963,190.7 L1030,184 L1097,177.3 L1164,170.6 L1231,164.1 L1298,157.7 L1365,151.3 L1432,145 L1499,138.8 L1499,143.8 L1432,150 L1365,156.3 L1298,162.6 L1231,169.1 L1164,175.6 L1097,182.2 L1030,189 L963,195.7 L896,202.6 L829,209.6 L762,216.6 L695,223.8 L628,231 L561,238.3 L494,245.7 L427,253.1 L426.9,255.3 L416,254.1Z" fill="#6A69F5"/><path d="M416,253.8 L426.9,255 L427,252.8 L494,245.3 L561,237.9 L628,230.6 L695,223.4 L762,216.3 L829,209.2 L896,202.3 L963,195.4 L1030,188.6 L1097,181.9 L1164,175.3 L1231,168.7 L1298,162.3 L1365,155.9 L1432,149.7 L1499,143.5 L1499,145 L1432,151.2 L1365,157.5 L1298,163.9 L1231,170.3 L1164,176.8 L1097,183.5 L1030,190.2 L963,197 L896,203.8 L829,210.8 L762,217.8 L695,225 L628,232.2 L561,239.5 L494,246.9 L427,254.3 L426.9,256.5 L416,255.3Z" fill="#760000"/><path d="M416,255 L426.9,256.2 L427,254 L494,246.5 L561,239.1 L628,231.8 L695,224.6 L762,217.5 L829,210.4 L896,203.5 L963,196.6 L1030,189.8 L1097,183.1 L1164,176.5 L1231,170 L1298,163.5 L1365,157.1 L1432,150.9 L1499,144.7 L1499,147.8 L1432,154 L1365,160.3 L1298,166.7 L1231,173.1 L1164,179.7 L1097,186.3 L1030,193 L963,199.8 L896,206.7 L829,213.6 L762,220.7 L695,227.8 L628,235 L561,242.3 L494,249.7 L427,257.2 L426.9,259.4 L416,258.2Z" fill="#6A69F5"/><path d="M416,258 L426.9,259.2 L427,257 L494,249.6 L561,242.2 L628,234.9 L695,227.6 L762,220.5 L829,213.5 L896,206.5 L963,199.6 L1030,192.8 L1097,186.1 L1164,179.5 L1231,173 L1298,166.5 L1365,160.2 L1432,153.9 L1499,147.7 L1499,149.9 L1432,156.1 L1365,162.3 L1298,168.7 L1231,175.1 L1164,181.7 L1097,188.3 L1030,195 L963,201.8 L896,208.7 L829,215.6 L762,222.7 L695,229.8 L628,237 L561,244.3 L494,251.7 L427,259.2 L426.9,261.4 L416,260.2Z" fill="#40FE8E"/><path d="M416,260 L426.9,261.2 L427,259 L494,251.6 L561,244.2 L628,236.9 L695,229.7 L762,222.5 L829,215.5 L896,208.5 L963,201.6 L1030,194.9 L1097,188.2 L1164,181.5 L1231,175 L1298,168.6 L1365,162.2 L1432,155.9 L1499,149.7 L1499,152.5 L1432,158.7 L1365,165 L1298,171.3 L1231,177.8 L1164,184.3 L1097,190.9 L1030,197.6 L963,204.4 L896,211.3 L829,218.3 L762,225.3 L695,232.4 L628,239.7 L561,247 L494,254.3 L427,261.8 L426.9,264 L416,262.8Z" fill="#6A69F5"/><path d="M416,262.7 L426.9,263.9 L427,261.7 L494,254.2 L561,246.8 L628,239.5 L695,232.3 L762,225.2 L829,218.1 L896,211.1 L963,204.3 L1030,197.5 L1097,190.8 L1164,184.2 L1231,177.6 L1298,171.2 L1365,164.8 L1432,158.5 L1499,152.3 L1499,153.9 L1432,160.1 L1365,166.4 L1298,172.7 L1231,179.2 L1164,185.7 L1097,192.3 L1030,199 L963,205.8 L896,212.7 L829,219.7 L762,226.7 L695,233.9 L628,241.1 L561,248.4 L494,255.8 L427,263.2 L426.9,265.4 L416,264.2Z" fill="#40FE8E"/><path d="M416,264.1 L426.9,265.3 L427,263.1 L494,255.6 L561,248.2 L628,240.9 L695,233.7 L762,226.6 L829,219.5 L896,212.6 L963,205.7 L1030,198.9 L1097,192.2 L1164,185.6 L1231,179 L1298,172.6 L1365,166.2 L1432,159.9 L1499,153.8 L1499,155.7 L1432,161.9 L1365,168.2 L1298,174.6 L1231,181 L1164,187.5 L1097,194.2 L1030,200.9 L963,207.7 L896,214.5 L829,221.5 L762,228.5 L695,235.7 L628,242.9 L561,250.2 L494,257.6 L427,265 L426.9,267.2 L416,266Z" fill="#6A69F5"/><path d="M416,265.9 L426.9,267.1 L427,264.9 L494,257.4 L561,250 L628,242.7 L695,235.5 L762,228.4 L829,221.3 L896,214.4 L963,207.5 L1030,200.7 L1097,194 L1164,187.4 L1231,180.9 L1298,174.4 L1365,168 L1432,161.8 L1499,155.6 L1499,156.9 L1432,163.1 L1365,169.4 L1298,175.8 L1231,182.2 L1164,188.7 L1097,195.4 L1030,202.1 L963,208.9 L896,215.7 L829,222.7 L762,229.7 L695,236.9 L628,244.1 L561,251.4 L494,258.8 L427,266.3 L426.9,268.5 L416,267.3Z" fill="#40FE8E"/><path d="M416,267.1 L426.9,268.3 L427,266.1 L494,258.6 L561,251.2 L628,243.9 L695,236.7 L762,229.6 L829,222.6 L896,215.6 L963,208.7 L1030,201.9 L1097,195.2 L1164,188.6 L1231,182.1 L1298,175.6 L1365,169.3 L1432,163 L1499,156.8 L1499,159.6 L1432,165.7 L1365,172 L1298,178.4 L1231,184.8 L1164,191.4 L1097,198 L1030,204.7 L963,211.5 L896,218.4 L829,225.3 L762,232.4 L695,239.5 L628,246.7 L561,254 L494,261.4 L427,268.9 L426.9,271.1 L416,269.9Z" fill="#6A69F5"/><path d="M416,269.7 L426.9,270.9 L427,268.7 L494,261.3 L561,253.9 L628,246.6 L695,239.4 L762,232.2 L829,225.2 L896,218.2 L963,211.3 L1030,204.5 L1097,197.8 L1164,191.2 L1231,184.7 L1298,178.2 L1365,171.9 L1432,165.6 L1499,159.4 L1499,165.3 L1432,171.5 L1365,177.8 L1298,184.1 L1231,190.6 L1164,197.1 L1097,203.7 L1030,210.5 L963,217.2 L896,224.1 L829,231.1 L762,238.1 L695,245.3 L628,252.5 L561,259.8 L494,267.2 L427,274.6 L426.9,276.8 L416,275.6Z" fill="#40FE8E"/><path d="M416,275.5 L426.9,276.7 L427,274.5 L494,267 L561,259.6 L628,252.3 L695,245.1 L762,238 L829,230.9 L896,224 L963,217.1 L1030,210.3 L1097,203.6 L1164,197 L1231,190.4 L1298,184 L1365,177.6 L1432,171.3 L1499,165.2 L1499,167 L1432,173.2 L1365,179.5 L1298,185.9 L1231,192.3 L1164,198.8 L1097,205.5 L1030,212.2 L963,219 L896,225.8 L829,232.8 L762,239.8 L695,247 L628,254.2 L561,261.5 L494,268.9 L427,276.3 L426.9,278.5 L416,277.3Z" fill="#4A8CA8"/><path d="M416,277.2 L426.9,278.4 L427,276.2 L494,268.7 L561,261.3 L628,254 L695,246.8 L762,239.7 L829,232.6 L896,225.7 L963,218.8 L1030,212 L1097,205.3 L1164,198.7 L1231,192.2 L1298,185.7 L1365,179.3 L1432,173.1 L1499,166.9 L1499,169.7 L1432,175.9 L1365,182.2 L1298,188.6 L1231,195 L1164,201.6 L1097,208.2 L1030,214.9 L963,221.7 L896,228.6 L829,235.5 L762,242.6 L695,249.7 L628,256.9 L561,264.2 L494,271.6 L427,279.1 L426.9,281.3 L416,280.1Z" fill="#40FE8E"/><path d="M416,279.9 L426.9,281.1 L427,278.9 L494,271.5 L561,264.1 L628,256.8 L695,249.5 L762,242.4 L829,235.4 L896,228.4 L963,221.5 L1030,214.7 L1097,208 L1164,201.4 L1231,194.9 L1298,188.4 L1365,182.1 L1432,175.8 L1499,169.6 L1499,171.7 L1432,177.9 L1365,184.1 L1298,190.5 L1231,196.9 L1164,203.5 L1097,210.1 L1030,216.8 L963,223.6 L896,230.5 L829,237.4 L762,244.5 L695,251.6 L628,258.8 L561,266.1 L494,273.5 L427,281 L426.9,283.2 L416,282Z" fill="#4A8CA8"/><path d="M416,281.8 L426.9,283 L427,280.8 L494,273.4 L561,266 L628,258.7 L695,251.5 L762,244.3 L829,237.3 L896,230.3 L963,223.4 L1030,216.7 L1097,210 L1164,203.3 L1231,196.8 L1298,190.4 L1365,184 L1432,177.7 L1499,171.5 L1499,173.6 L1432,179.8 L1365,186.1 L1298,192.4 L1231,198.9 L1164,205.4 L1097,212 L1030,218.7 L963,225.5 L896,232.4 L829,239.4 L762,246.4 L695,253.5 L628,260.7 L561,268 L494,275.4 L427,282.9 L426.9,285.1 L416,283.9Z" fill="#40FE8E"/><path d="M416,283.8 L426.9,285 L427,282.8 L494,275.3 L561,267.9 L628,260.6 L695,253.4 L762,246.2 L829,239.2 L896,232.2 L963,225.4 L1030,218.6 L1097,211.9 L1164,205.3 L1231,198.7 L1298,192.3 L1365,185.9 L1432,179.6 L1499,173.4 L1499,176.1 L1432,182.3 L1365,188.6 L1298,194.9 L1231,201.4 L1164,207.9 L1097,214.5 L1030,221.2 L963,228 L896,234.9 L829,241.9 L762,248.9 L695,256.1 L628,263.3 L561,270.6 L494,278 L427,285.4 L426.9,287.6 L416,286.4Z" fill="#6A69F5"/><path d="M416,286.3 L426.9,287.5 L427,285.3 L494,277.8 L561,270.4 L628,263.1 L695,255.9 L762,248.8 L829,241.7 L896,234.8 L963,227.9 L1030,221.1 L1097,214.4 L1164,207.8 L1231,201.2 L1298,194.8 L1365,188.4 L1432,182.1 L1499,176 L1499,177.4 L1432,183.6 L1365,189.9 L1298,196.3 L1231,202.7 L1164,209.2 L1097,215.9 L1030,222.6 L963,229.4 L896,236.2 L829,243.2 L762,250.2 L695,257.4 L628,264.6 L561,271.9 L494,279.3 L427,286.7 L426.9,288.9 L416,287.7Z" fill="#40FE8E"/><path d="M416,287.6 L426.9,288.8 L427,286.6 L494,279.1 L561,271.7 L628,264.4 L695,257.2 L762,250.1 L829,243 L896,236.1 L963,229.2 L1030,222.4 L1097,215.7 L1164,209.1 L1231,202.6 L1298,196.1 L1365,189.7 L1432,183.5 L1499,177.3 L1499,179.1 L1432,185.3 L1365,191.6 L1298,198 L1231,204.4 L1164,211 L1097,217.6 L1030,224.3 L963,231.1 L896,237.9 L829,244.9 L762,252 L695,259.1 L628,266.3 L561,273.6 L494,281 L427,288.5 L426.9,290.7 L416,289.5Z" fill="#6A69F5"/><path d="M416,289.3 L426.9,290.5 L427,288.3 L494,280.8 L561,273.5 L628,266.1 L695,258.9 L762,251.8 L829,244.8 L896,237.8 L963,230.9 L1030,224.1 L1097,217.4 L1164,210.8 L1231,204.3 L1298,197.8 L1365,191.5 L1432,185.2 L1499,179 L1499,180.5 L1432,186.7 L1365,193 L1298,199.4 L1231,205.8 L1164,212.4 L1097,219 L1030,225.7 L963,232.5 L896,239.4 L829,246.3 L762,253.4 L695,260.5 L628,267.7 L561,275 L494,282.4 L427,289.9 L426.9,292.1 L416,290.9Z" fill="#40FE8E"/><path d="M416,290.7 L426.9,291.9 L427,289.7 L494,282.3 L561,274.9 L628,267.6 L695,260.3 L762,253.2 L829,246.2 L896,239.2 L963,232.3 L1030,225.5 L1097,218.8 L1164,212.2 L1231,205.7 L1298,199.2 L1365,192.9 L1432,186.6 L1499,180.4 L1499,187 L1432,193.2 L1365,199.5 L1298,205.8 L1231,212.3 L1164,218.8 L1097,225.4 L1030,232.1 L963,238.9 L896,245.8 L829,252.8 L762,259.8 L695,267 L628,274.2 L561,281.5 L494,288.9 L427,296.3 L426.9,298.5 L416,297.3Z" fill="#6A69F5"/><path d="M416,297.2 L426.9,298.4 L427,296.2 L494,288.7 L561,281.3 L628,274 L695,266.8 L762,259.7 L829,252.6 L896,245.7 L963,238.8 L1030,232 L1097,225.3 L1164,218.7 L1231,212.1 L1298,205.7 L1365,199.3 L1432,193 L1499,186.9 L1499,188.9 L1432,195.1 L1365,201.4 L1298,207.8 L1231,214.2 L1164,220.7 L1097,227.4 L1030,234.1 L963,240.9 L896,247.7 L829,254.7 L762,261.7 L695,268.9 L628,276.1 L561,283.4 L494,290.8 L427,298.2 L426.9,300.4 L416,299.2Z" fill="#4A8CA8"/><path d="M416,299.1 L426.9,300.3 L427,298.1 L494,290.6 L561,283.2 L628,275.9 L695,268.7 L762,261.6 L829,254.5 L896,247.6 L963,240.7 L1030,233.9 L1097,227.2 L1164,220.6 L1231,214.1 L1298,207.6 L1365,201.2 L1432,195 L1499,188.8 L1499,194 L1432,200.2 L1365,206.4 L1298,212.8 L1231,219.3 L1164,225.8 L1097,232.4 L1030,239.1 L963,245.9 L896,252.8 L829,259.7 L762,266.8 L695,273.9 L628,281.1 L561,288.4 L494,295.8 L427,303.3 L426.9,305.5 L416,304.3Z" fill="#6A69F5"/><path d="M416,304.1 L426.9,305.3 L427,303.1 L494,295.7 L561,288.3 L628,281 L695,273.8 L762,266.6 L829,259.6 L896,252.6 L963,245.8 L1030,239 L1097,232.3 L1164,225.6 L1231,219.1 L1298,212.7 L1365,206.3 L1432,200 L1499,193.8 L1499,198.5 L1432,204.7 L1365,211 L1298,217.3 L1231,223.8 L1164,230.3 L1097,236.9 L1030,243.7 L963,250.4 L896,257.3 L829,264.3 L762,271.3 L695,278.5 L628,285.7 L561,293 L494,300.4 L427,307.8 L426.9,310 L416,308.8Z" fill="#6452AC"/><path d="M416,308.7 L426.9,309.9 L427,307.7 L494,300.2 L561,292.8 L628,285.5 L695,278.3 L762,271.2 L829,264.1 L896,257.2 L963,250.3 L1030,243.5 L1097,236.8 L1164,230.2 L1231,223.6 L1298,217.2 L1365,210.8 L1432,204.6 L1499,198.4 L1499,199.8 L1432,206 L1365,212.3 L1298,218.7 L1231,225.1 L1164,231.6 L1097,238.3 L1030,245 L963,251.8 L896,258.6 L829,265.6 L762,272.6 L695,279.8 L628,287 L561,294.3 L494,301.7 L427,309.1 L426.9,311.3 L416,310.1Z" fill="#4A8CA8"/><path d="M416,310 L426.9,311.2 L427,309 L494,301.5 L561,294.1 L628,286.8 L695,279.6 L762,272.5 L829,265.4 L896,258.5 L963,251.6 L1030,244.8 L1097,238.1 L1164,231.5 L1231,225 L1298,218.5 L1365,212.1 L1432,205.9 L1499,199.7 L1499,204.3 L1432,210.5 L1365,216.8 L1298,223.2 L1231,229.6 L1164,236.2 L1097,242.8 L1030,249.5 L963,256.3 L896,263.1 L829,270.1 L762,277.2 L695,284.3 L628,291.5 L561,298.8 L494,306.2 L427,313.7 L426.9,315.9 L416,314.7Z" fill="#FDB827"/><path d="M416,314.5 L426.9,315.7 L427,313.5 L494,306 L561,298.7 L628,291.4 L695,284.1 L762,277 L829,270 L896,263 L963,256.1 L1030,249.3 L1097,242.6 L1164,236 L1231,229.5 L1298,223 L1365,216.7 L1432,210.4 L1499,204.2 L1499,205.3 L1432,211.5 L1365,217.8 L1298,224.2 L1231,230.6 L1164,237.2 L1097,243.8 L1030,250.5 L963,257.3 L896,264.1 L829,271.1 L762,278.2 L695,285.3 L628,292.5 L561,299.8 L494,307.2 L427,314.7 L426.9,316.9 L416,315.7Z" fill="#E0A030"/><path d="M416,315.5 L426.9,316.7 L427,314.5 L494,307 L561,299.7 L628,292.4 L695,285.1 L762,278 L829,271 L896,264 L963,257.1 L1030,250.3 L1097,243.6 L1164,237 L1231,230.5 L1298,224 L1365,217.7 L1432,211.4 L1499,205.2 L1499,255.7 L1432,261.9 L1365,268.2 L1298,274.5 L1231,281 L1164,287.5 L1097,294.1 L1030,300.8 L963,307.6 L896,314.5 L829,321.5 L762,328.5 L695,335.6 L628,342.9 L561,350.2 L494,357.5 L427,365 L426.9,367.2 L416,366Z" fill="#FDB827"/><path d="M416,365.9 L426.9,367.1 L427,364.9 L494,357.4 L561,350 L628,342.7 L695,335.5 L762,328.4 L829,321.3 L896,314.4 L963,307.5 L1030,300.7 L1097,294 L1164,287.4 L1231,280.8 L1298,274.4 L1365,268 L1432,261.7 L1499,255.5 L1499,257.5 L1432,263.7 L1365,270 L1298,276.3 L1231,282.8 L1164,289.3 L1097,295.9 L1030,302.6 L963,309.4 L896,316.3 L829,323.3 L762,330.3 L695,337.4 L628,344.7 L561,352 L494,359.4 L427,366.8 L426.9,369 L416,367.8Z" fill="#760000"/><path d="M416,367.7 L426.9,368.9 L427,366.7 L494,359.2 L561,351.8 L628,344.5 L695,337.3 L762,330.2 L829,323.1 L896,316.2 L963,309.3 L1030,302.5 L1097,295.8 L1164,289.2 L1231,282.6 L1298,276.2 L1365,269.8 L1432,263.5 L1499,257.4 L1499,260.1 L1432,266.3 L1365,272.6 L1298,278.9 L1231,285.4 L1164,291.9 L1097,298.5 L1030,305.3 L963,312 L896,318.9 L829,325.9 L762,332.9 L695,340.1 L628,347.3 L561,354.6 L494,362 L427,369.4 L426.9,371.6 L416,370.4Z" fill="#FDB827"/><path d="M416,370.3 L426.9,371.5 L427,369.3 L494,361.8 L561,354.4 L628,347.1 L695,339.9 L762,332.8 L829,325.7 L896,318.8 L963,311.9 L1030,305.1 L1097,298.4 L1164,291.8 L1231,285.2 L1298,278.8 L1365,272.4 L1432,266.2 L1499,260 L1499,264 L1432,270.2 L1365,276.5 L1298,282.9 L1231,289.3 L1164,295.8 L1097,302.5 L1030,309.2 L963,316 L896,322.8 L829,329.8 L762,336.8 L695,344 L628,351.2 L561,358.5 L494,365.9 L427,373.3 L426.9,375.5 L416,374.3Z" fill="#760000"/><path d="M416,374.2 L426.9,375.4 L427,373.2 L494,365.7 L561,358.3 L628,351 L695,343.8 L762,336.7 L829,329.6 L896,322.7 L963,315.8 L1030,309 L1097,302.3 L1164,295.7 L1231,289.2 L1298,282.7 L1365,276.3 L1432,270.1 L1499,263.9 L1499,265.2 L1432,271.4 L1365,277.7 L1298,284.1 L1231,290.5 L1164,297 L1097,303.7 L1030,310.4 L963,317.2 L896,324 L829,331 L762,338 L695,345.2 L628,352.4 L561,359.7 L494,367.1 L427,374.6 L426.9,376.7 L416,375.6Z" fill="#FDB827"/><path d="M416,375.4 L426.9,376.6 L427,374.4 L494,366.9 L561,359.5 L628,352.2 L695,345 L762,337.9 L829,330.8 L896,323.9 L963,317 L1030,310.2 L1097,303.5 L1164,296.9 L1231,290.4 L1298,283.9 L1365,277.5 L1432,271.3 L1499,265.1 L1499,269 L1432,275.2 L1365,281.5 L1298,287.9 L1231,294.3 L1164,300.9 L1097,307.5 L1030,314.2 L963,321 L896,327.8 L829,334.8 L762,341.9 L695,349 L628,356.2 L561,363.5 L494,370.9 L427,378.4 L426.9,380.6 L416,379.4Z" fill="#A65F14"/><path d="M416,379.2 L426.9,380.4 L427,378.2 L494,370.7 L561,363.4 L628,356.1 L695,348.8 L762,341.7 L829,334.7 L896,327.7 L963,320.8 L1030,314 L1097,307.3 L1164,300.7 L1231,294.2 L1298,287.7 L1365,281.4 L1432,275.1 L1499,268.9 L1499,274.2 L1432,280.3 L1365,286.6 L1298,293 L1231,299.4 L1164,306 L1097,312.6 L1030,319.3 L963,326.1 L896,333 L829,339.9 L762,347 L695,354.1 L628,361.3 L561,368.6 L494,376 L427,383.5 L426.9,385.7 L416,384.5Z" fill="#FDB827"/><path d="M416,384.3 L426.9,385.5 L427,383.3 L494,375.9 L561,368.5 L628,361.2 L695,353.9 L762,346.8 L829,339.8 L896,332.8 L963,325.9 L1030,319.1 L1097,312.4 L1164,305.8 L1231,299.3 L1298,292.8 L1365,286.5 L1432,280.2 L1499,274 L1499,276.6 L1432,282.8 L1365,289 L1298,295.4 L1231,301.8 L1164,308.4 L1097,315 L1030,321.7 L963,328.5 L896,335.4 L829,342.3 L762,349.4 L695,356.5 L628,363.7 L561,371 L494,378.4 L427,385.9 L426.9,388.1 L416,386.9Z" fill="#760000"/><path d="M416,386.7 L426.9,387.9 L427,385.7 L494,378.3 L561,370.9 L628,363.6 L695,356.4 L762,349.2 L829,342.2 L896,335.2 L963,328.3 L1030,321.6 L1097,314.8 L1164,308.2 L1231,301.7 L1298,295.2 L1365,288.9 L1432,282.6 L1499,276.4 L1499,279.8 L1432,286 L1365,292.2 L1298,298.6 L1231,305.1 L1164,311.6 L1097,318.2 L1030,324.9 L963,331.7 L896,338.6 L829,345.5 L762,352.6 L695,359.7 L628,366.9 L561,374.2 L494,381.6 L427,389.1 L426.9,391.3 L416,390.1Z" fill="#FDB827"/><path d="M416,389.9 L426.9,391.1 L427,388.9 L494,381.5 L561,374.1 L628,366.8 L695,359.6 L762,352.4 L829,345.4 L896,338.4 L963,331.6 L1030,324.8 L1097,318.1 L1164,311.4 L1231,304.9 L1298,298.5 L1365,292.1 L1432,285.8 L1499,279.6 L1499,281.7 L1432,287.9 L1365,294.1 L1298,300.5 L1231,307 L1164,313.5 L1097,320.1 L1030,326.8 L963,333.6 L896,340.5 L829,347.4 L762,354.5 L695,361.6 L628,368.8 L561,376.1 L494,383.5 L427,391 L426.9,393.2 L416,392Z" fill="#760000"/><path d="M416,391.9 L426.9,393 L427,390.9 L494,383.4 L561,376 L628,368.7 L695,361.5 L762,354.3 L829,347.3 L896,340.3 L963,333.5 L1030,326.7 L1097,320 L1164,313.3 L1231,306.8 L1298,300.4 L1365,294 L1432,287.7 L1499,281.5 L1499,285.6 L1432,291.8 L1365,298.1 L1298,304.4 L1231,310.9 L1164,317.4 L1097,324 L1030,330.7 L963,337.5 L896,344.4 L829,351.4 L762,358.4 L695,365.5 L628,372.8 L561,380.1 L494,387.4 L427,394.9 L426.9,397.1 L416,395.9Z" fill="#FDB827"/><path d="M416,395.8 L426.9,397 L427,394.8 L494,387.3 L561,379.9 L628,372.6 L695,365.4 L762,358.3 L829,351.2 L896,344.2 L963,337.4 L1030,330.6 L1097,323.9 L1164,317.3 L1231,310.7 L1298,304.3 L1365,297.9 L1432,291.6 L1499,285.4 L1499,287.4 L1432,293.6 L1365,299.9 L1298,306.2 L1231,312.7 L1164,319.2 L1097,325.8 L1030,332.5 L963,339.3 L896,346.2 L829,353.2 L762,360.2 L695,367.3 L628,374.6 L561,381.9 L494,389.2 L427,396.7 L426.9,398.9 L416,397.7Z" fill="#760000"/><path d="M416,397.6 L426.9,398.8 L427,396.6 L494,389.1 L561,381.7 L628,374.4 L695,367.2 L762,360.1 L829,353 L896,346.1 L963,339.2 L1030,332.4 L1097,325.7 L1164,319.1 L1231,312.5 L1298,306.1 L1365,299.7 L1432,293.4 L1499,287.2 L1499,311 L1432,317.2 L1365,323.4 L1298,329.8 L1231,336.2 L1164,342.8 L1097,349.4 L1030,356.1 L963,362.9 L896,369.8 L829,376.7 L762,383.8 L695,390.9 L628,398.1 L561,405.4 L494,412.8 L427,420.3 L426.9,422.5 L416,421.3Z" fill="#FDB827"/><path d="M416,421.1 L426.9,422.3 L427,420.1 L494,412.7 L561,405.3 L628,398 L695,390.8 L762,383.6 L829,376.6 L896,369.6 L963,362.7 L1030,356 L1097,349.3 L1164,342.6 L1231,336.1 L1298,329.7 L1365,323.3 L1432,317 L1499,310.8 L1499,314.2 L1432,320.4 L1365,326.6 L1298,333 L1231,339.5 L1164,346 L1097,352.6 L1030,359.3 L963,366.1 L896,373 L829,379.9 L762,387 L695,394.1 L628,401.3 L561,408.6 L494,416 L427,423.5 L426.9,425.7 L416,424.5Z" fill="#A65F14"/><path d="M416,424.4 L426.9,425.5 L427,423.4 L494,415.9 L561,408.5 L628,401.2 L695,394 L762,386.8 L829,379.8 L896,372.8 L963,366 L1030,359.2 L1097,352.5 L1164,345.8 L1231,339.3 L1298,332.9 L1365,326.5 L1432,320.2 L1499,314 L1499,318 L1432,324.2 L1365,330.5 L1298,336.8 L1231,343.3 L1164,349.8 L1097,356.4 L1030,363.1 L963,369.9 L896,376.8 L829,383.8 L762,390.8 L695,397.9 L628,405.2 L561,412.5 L494,419.8 L427,427.3 L426.9,429.5 L416,428.3Z" fill="#FDB827"/><path d="M416,428.2 L426.9,429.4 L427,427.2 L494,419.7 L561,412.3 L628,405 L695,397.8 L762,390.7 L829,383.6 L896,376.6 L963,369.8 L1030,363 L1097,356.3 L1164,349.7 L1231,343.1 L1298,336.7 L1365,330.3 L1432,324 L1499,317.8 L1499,318.8 L1432,325 L1365,331.3 L1298,337.6 L1231,344.1 L1164,350.6 L1097,357.2 L1030,363.9 L963,370.7 L896,377.6 L829,384.6 L762,391.6 L695,398.7 L628,406 L561,413.3 L494,420.6 L427,428.1 L426.9,430.3 L416,429.1Z" fill="#A65F14"/><path d="M416,429 L426.9,430.2 L427,428 L494,420.5 L561,413.1 L628,405.8 L695,398.6 L762,391.5 L829,384.4 L896,377.4 L963,370.6 L1030,363.8 L1097,357.1 L1164,350.5 L1231,343.9 L1298,337.5 L1365,331.1 L1432,324.8 L1499,318.6 L1499,323 L1432,329.2 L1365,335.5 L1298,341.8 L1231,348.3 L1164,354.8 L1097,361.4 L1030,368.1 L963,374.9 L896,381.8 L829,388.8 L762,395.8 L695,402.9 L628,410.2 L561,417.5 L494,424.9 L427,432.3 L426.9,434.5 L416,433.3Z" fill="#FDB827"/><path d="M416,433.2 L426.9,434.4 L427,432.2 L494,424.7 L561,417.3 L628,410 L695,402.8 L762,395.7 L829,388.6 L896,381.7 L963,374.8 L1030,368 L1097,361.3 L1164,354.7 L1231,348.1 L1298,341.7 L1365,335.3 L1432,329 L1499,322.9 L1499,323.9 L1432,330.1 L1365,336.4 L1298,342.7 L1231,349.2 L1164,355.7 L1097,362.3 L1030,369 L963,375.8 L896,382.7 L829,389.7 L762,396.7 L695,403.9 L628,411.1 L561,418.4 L494,425.8 L427,433.2 L426.9,435.4 L416,434.2Z" fill="#A65F14"/><path d="M416,434.1 L426.9,435.3 L427,433.1 L494,425.6 L561,418.2 L628,410.9 L695,403.7 L762,396.6 L829,389.5 L896,382.6 L963,375.7 L1030,368.9 L1097,362.2 L1164,355.6 L1231,349 L1298,342.6 L1365,336.2 L1432,329.9 L1499,323.8 L1499,330 L1432,336.2 L1365,342.5 L1298,348.9 L1231,355.3 L1164,361.8 L1097,368.5 L1030,375.2 L963,382 L896,388.8 L829,395.8 L762,402.8 L695,410 L628,417.2 L561,424.5 L494,431.9 L427,439.4 L426.9,441.5 L416,440.4Z" fill="#FDB827"/><path d="M416,440.2 L426.9,441.4 L427,439.2 L494,431.7 L561,424.3 L628,417 L695,409.8 L762,402.7 L829,395.6 L896,388.7 L963,381.8 L1030,375 L1097,368.3 L1164,361.7 L1231,355.2 L1298,348.7 L1365,342.3 L1432,336.1 L1499,329.9 L1499,331.9 L1432,338.1 L1365,344.4 L1298,350.8 L1231,357.2 L1164,363.7 L1097,370.4 L1030,377.1 L963,383.9 L896,390.7 L829,397.7 L762,404.7 L695,411.9 L628,419.1 L561,426.4 L494,433.8 L427,441.3 L426.9,443.5 L416,442.3Z" fill="#760000"/><path d="M416,442.1 L426.9,443.3 L427,441.1 L494,433.6 L561,426.2 L628,418.9 L695,411.7 L762,404.6 L829,397.5 L896,390.6 L963,383.7 L1030,376.9 L1097,370.2 L1164,363.6 L1231,357.1 L1298,350.6 L1365,344.3 L1432,338 L1499,331.8 L1499,342.1 L1432,348.3 L1365,354.5 L1298,360.9 L1231,367.3 L1164,373.9 L1097,380.5 L1030,387.2 L963,394 L896,400.9 L829,407.8 L762,414.9 L695,422 L628,429.2 L561,436.5 L494,443.9 L427,451.4 L426.9,453.6 L416,452.4Z" fill="#FDB827"/><path d="M416,452.2 L426.9,453.4 L427,451.2 L494,443.8 L561,436.4 L628,429.1 L695,421.9 L762,414.7 L829,407.7 L896,400.7 L963,393.8 L1030,387.1 L1097,380.3 L1164,373.7 L1231,367.2 L1298,360.7 L1365,354.4 L1432,348.1 L1499,341.9 L1499,344.7 L1432,350.9 L1365,357.1 L1298,363.5 L1231,370 L1164,376.5 L1097,383.1 L1030,389.8 L963,396.6 L896,403.5 L829,410.4 L762,417.5 L695,424.6 L628,431.8 L561,439.1 L494,446.5 L427,454 L426.9,456.2 L416,455Z" fill="#760000"/><path d="M416,454.8 L426.9,456 L427,453.8 L494,446.4 L561,439 L628,431.7 L695,424.5 L762,417.3 L829,410.3 L896,403.3 L963,396.5 L1030,389.7 L1097,383 L1164,376.3 L1231,369.8 L1298,363.4 L1365,357 L1432,350.7 L1499,344.5 L1499,346.6 L1432,352.8 L1365,359 L1298,365.4 L1231,371.9 L1164,378.4 L1097,385 L1030,391.7 L963,398.5 L896,405.4 L829,412.3 L762,419.4 L695,426.5 L628,433.7 L561,441 L494,448.4 L427,455.9 L426.9,458.1 L416,456.9Z" fill="#FDB827"/><path d="M416,456.8 L426.9,457.9 L427,455.8 L494,448.3 L561,440.9 L628,433.6 L695,426.4 L762,419.2 L829,412.2 L896,405.2 L963,398.4 L1030,391.6 L1097,384.9 L1164,378.2 L1231,371.7 L1298,365.3 L1365,358.9 L1432,352.6 L1499,346.4 L1499,348.5 L1432,354.7 L1365,361 L1298,367.3 L1231,373.8 L1164,380.3 L1097,386.9 L1030,393.6 L963,400.4 L896,407.3 L829,414.3 L762,421.3 L695,428.4 L628,435.6 L561,442.9 L494,450.3 L427,457.8 L426.9,460 L416,458.8Z" fill="#760000"/><path d="M416,458.7 L426.9,459.9 L427,457.7 L494,450.2 L561,442.8 L628,435.5 L695,428.3 L762,421.1 L829,414.1 L896,407.1 L963,400.3 L1030,393.5 L1097,386.8 L1164,380.1 L1231,373.6 L1298,367.2 L1365,360.8 L1432,354.5 L1499,348.3 L1499,352.8 L1432,359 L1365,365.3 L1298,371.6 L1231,378.1 L1164,384.6 L1097,391.2 L1030,397.9 L963,404.7 L896,411.6 L829,418.6 L762,425.6 L695,432.7 L628,440 L561,447.3 L494,454.6 L427,462.1 L426.9,464.3 L416,463.1Z" fill="#A65F14"/><path d="M416,463 L426.9,464.2 L427,462 L494,454.5 L561,447.1 L628,439.8 L695,432.6 L762,425.5 L829,418.4 L896,411.5 L963,404.6 L1030,397.8 L1097,391.1 L1164,384.5 L1231,377.9 L1298,371.5 L1365,365.1 L1432,358.8 L1499,352.6 L1499,357.5 L1432,363.7 L1365,370 L1298,376.3 L1231,382.8 L1164,389.3 L1097,395.9 L1030,402.7 L963,409.4 L896,416.3 L829,423.3 L762,430.3 L695,437.5 L628,444.7 L561,452 L494,459.4 L427,466.8 L426.9,469 L416,467.8Z" fill="#760000"/><path d="M416,467.7 L426.9,468.9 L427,466.7 L494,459.2 L561,451.8 L628,444.5 L695,437.3 L762,430.2 L829,423.1 L896,416.2 L963,409.3 L1030,402.5 L1097,395.8 L1164,389.2 L1231,382.6 L1298,376.2 L1365,369.8 L1432,363.6 L1499,357.4 L1499,358.5 L1432,364.7 L1365,371 L1298,377.3 L1231,383.8 L1164,390.3 L1097,396.9 L1030,403.7 L963,410.4 L896,417.3 L829,424.3 L762,431.3 L695,438.5 L628,445.7 L561,453 L494,460.4 L427,467.8 L426.9,470 L416,468.8Z" fill="#FDB827"/><path d="M416,468.7 L426.9,469.9 L427,467.7 L494,460.2 L561,452.8 L628,445.5 L695,438.3 L762,431.2 L829,424.1 L896,417.2 L963,410.3 L1030,403.5 L1097,396.8 L1164,390.2 L1231,383.6 L1298,377.2 L1365,370.8 L1432,364.6 L1499,358.4 L1499,360 L1432,366.2 L1365,372.5 L1298,378.9 L1231,385.3 L1164,391.8 L1097,398.5 L1030,405.2 L963,411.9 L896,418.8 L829,425.8 L762,432.8 L695,440 L628,447.2 L561,454.5 L494,461.9 L427,469.3 L426.9,471.5 L416,470.3Z" fill="#760000"/><path d="M416,470.2 L426.9,471.4 L427,469.2 L494,461.7 L561,454.3 L628,447 L695,439.8 L762,432.7 L829,425.6 L896,418.7 L963,411.8 L1030,405 L1097,398.3 L1164,391.7 L1231,385.2 L1298,378.7 L1365,372.3 L1432,366.1 L1499,359.9 L1499,361 L1432,367.2 L1365,373.5 L1298,379.9 L1231,386.3 L1164,392.8 L1097,399.5 L1030,406.2 L963,413 L896,419.8 L829,426.8 L762,433.8 L695,441 L628,448.2 L561,455.5 L494,462.9 L427,470.3 L426.9,472.5 L416,471.3Z" fill="#FDB827"/><path d="M416,471.2 L426.9,472.4 L427,470.2 L494,462.7 L561,455.3 L628,448 L695,440.8 L762,433.7 L829,426.6 L896,419.7 L963,412.8 L1030,406 L1097,399.3 L1164,392.7 L1231,386.2 L1298,379.7 L1365,373.3 L1432,367.1 L1499,360.9 L1499,368.9 L1432,375.1 L1365,381.4 L1298,387.8 L1231,394.2 L1164,400.8 L1097,407.4 L1030,414.1 L963,420.9 L896,427.8 L829,434.7 L762,441.8 L695,448.9 L628,456.1 L561,463.4 L494,470.8 L427,478.3 L426.9,480.5 L416,479.3Z" fill="#760000"/><path d="M416,479.1 L426.9,480.3 L427,478.1 L494,470.6 L561,463.3 L628,456 L695,448.7 L762,441.6 L829,434.6 L896,427.6 L963,420.7 L1030,413.9 L1097,407.2 L1164,400.6 L1231,394.1 L1298,387.6 L1365,381.3 L1432,375 L1499,368.8 L1499,370.4 L1432,376.6 L1365,382.9 L1298,389.3 L1231,395.7 L1164,402.3 L1097,408.9 L1030,415.6 L963,422.4 L896,429.3 L829,436.2 L762,443.3 L695,450.4 L628,457.6 L561,464.9 L494,472.3 L427,479.8 L426.9,482 L416,480.8Z" fill="#FDB827"/><path d="M416,480.6 L426.9,481.8 L427,479.6 L494,472.2 L561,464.8 L628,457.5 L695,450.2 L762,443.1 L829,436.1 L896,429.1 L963,422.2 L1030,415.4 L1097,408.7 L1164,402.1 L1231,395.6 L1298,389.1 L1365,382.8 L1432,376.5 L1499,370.3 L1499,374.5 L1432,380.7 L1365,386.9 L1298,393.3 L1231,399.7 L1164,406.3 L1097,412.9 L1030,419.6 L963,426.4 L896,433.3 L829,440.2 L762,447.3 L695,454.4 L628,461.6 L561,468.9 L494,476.3 L427,483.8 L426.9,486 L416,484.8Z" fill="#760000"/><path d="M416,484.6 L426.9,485.8 L427,483.6 L494,476.2 L561,468.8 L628,461.5 L695,454.3 L762,447.1 L829,440.1 L896,433.1 L963,426.2 L1030,419.5 L1097,412.7 L1164,406.1 L1231,399.6 L1298,393.1 L1365,386.8 L1432,380.5 L1499,374.3 L1499,376.4 L1432,382.6 L1365,388.8 L1298,395.2 L1231,401.7 L1164,408.2 L1097,414.8 L1030,421.5 L963,428.3 L896,435.2 L829,442.1 L762,449.2 L695,456.3 L628,463.5 L561,470.8 L494,478.2 L427,485.7 L426.9,487.9 L416,486.7Z" fill="#FDB827"/><path d="M416,486.5 L426.9,487.7 L427,485.5 L494,478.1 L561,470.7 L628,463.4 L695,456.2 L762,449 L829,442 L896,435 L963,428.1 L1030,421.4 L1097,414.7 L1164,408 L1231,401.5 L1298,395.1 L1365,388.7 L1432,382.4 L1499,376.2 L1499,385.3 L1432,391.5 L1365,397.8 L1298,404.1 L1231,410.6 L1164,417.1 L1097,423.7 L1030,430.4 L963,437.2 L896,444.1 L829,451.1 L762,458.1 L695,465.2 L628,472.5 L561,479.8 L494,487.1 L427,494.6 L426.9,496.8 L416,495.6Z" fill="#760000"/><path d="M416,495.5 L426.9,496.7 L427,494.5 L494,487 L561,479.6 L628,472.3 L695,465.1 L762,458 L829,450.9 L896,444 L963,437.1 L1030,430.3 L1097,423.6 L1164,417 L1231,410.4 L1298,404 L1365,397.6 L1432,391.3 L1499,385.1 L1499,387.2 L1432,393.4 L1365,399.7 L1298,406 L1231,412.5 L1164,419 L1097,425.6 L1030,432.3 L963,439.1 L896,446 L829,453 L762,460 L695,467.1 L628,474.4 L561,481.7 L494,489.1 L427,496.5 L426.9,498.7 L416,497.5Z" fill="#FDB827"/><path d="M416,497.4 L426.9,498.6 L427,496.4 L494,488.9 L561,481.5 L628,474.2 L695,467 L762,459.9 L829,452.8 L896,445.9 L963,439 L1030,432.2 L1097,425.5 L1164,418.9 L1231,412.3 L1298,405.9 L1365,399.5 L1432,393.2 L1499,387 L1499,392.2 L1432,398.4 L1365,404.7 L1298,411.1 L1231,417.5 L1164,424 L1097,430.7 L1030,437.4 L963,444.1 L896,451 L829,458 L762,465 L695,472.2 L628,479.4 L561,486.7 L494,494.1 L427,501.5 L426.9,503.7 L416,502.5Z" fill="#760000"/><path d="M416,502.4 L426.9,503.6 L427,501.4 L494,493.9 L561,486.5 L628,479.2 L695,472 L762,464.9 L829,457.8 L896,450.9 L963,444 L1030,437.2 L1097,430.5 L1164,423.9 L1231,417.3 L1298,410.9 L1365,404.5 L1432,398.3 L1499,392.1 L1499,394.1 L1432,400.3 L1365,406.6 L1298,413 L1231,419.4 L1164,425.9 L1097,432.6 L1030,439.3 L963,446.1 L896,452.9 L829,459.9 L762,466.9 L695,474.1 L628,481.3 L561,488.6 L494,496 L427,503.4 L426.9,505.6 L416,504.4Z" fill="#A65F14"/><path d="M416,504.3 L426.9,505.5 L427,503.3 L494,495.8 L561,488.4 L628,481.1 L695,473.9 L762,466.8 L829,459.7 L896,452.8 L963,445.9 L1030,439.1 L1097,432.4 L1164,425.8 L1231,419.3 L1298,412.8 L1365,406.4 L1432,400.2 L1499,394 L1499,398.6 L1432,404.8 L1365,411.1 L1298,417.5 L1231,423.9 L1164,430.5 L1097,437.1 L1030,443.8 L963,450.6 L896,457.4 L829,464.4 L762,471.5 L695,478.6 L628,485.8 L561,493.1 L494,500.5 L427,508 L426.9,510.2 L416,509Z" fill="#760000"/><path d="M416,508.8 L426.9,510 L427,507.8 L494,500.3 L561,493 L628,485.6 L695,478.4 L762,471.3 L829,464.3 L896,457.3 L963,450.4 L1030,443.6 L1097,436.9 L1164,430.3 L1231,423.8 L1298,417.3 L1365,411 L1432,404.7 L1499,398.5 L1499,401.1 L1432,407.3 L1365,413.6 L1298,420 L1231,426.4 L1164,433 L1097,439.6 L1030,446.3 L963,453.1 L896,460 L829,466.9 L762,474 L695,481.1 L628,488.3 L561,495.6 L494,503 L427,510.5 L426.9,512.7 L416,511.5Z" fill="#FDB827"/><path d="M416,511.3 L426.9,512.5 L427,510.3 L494,502.8 L561,495.5 L628,488.2 L695,480.9 L762,473.8 L829,466.8 L896,459.8 L963,452.9 L1030,446.1 L1097,439.4 L1164,432.8 L1231,426.3 L1298,419.8 L1365,413.5 L1432,407.2 L1499,401 L1499,418.3 L1432,424.5 L1365,430.8 L1298,437.1 L1231,443.6 L1164,450.1 L1097,456.7 L1030,463.4 L963,470.2 L896,477.1 L829,484.1 L762,491.1 L695,498.2 L628,505.5 L561,512.8 L494,520.1 L427,527.6 L426.9,529.8 L416,528.6Z" fill="#760000"/><path d="M416,528.5 L426.9,529.7 L427,527.5 L494,520 L561,512.6 L628,505.3 L695,498.1 L762,491 L829,483.9 L896,477 L963,470.1 L1030,463.3 L1097,456.6 L1164,450 L1231,443.4 L1298,437 L1365,430.6 L1432,424.3 L1499,418.1 L1499,420.2 L1432,426.4 L1365,432.7 L1298,439 L1231,445.5 L1164,452 L1097,458.6 L1030,465.3 L963,472.1 L896,479 L829,486 L762,493 L695,500.1 L628,507.4 L561,514.7 L494,522.1 L427,529.5 L426.9,531.7 L416,530.5Z" fill="#A65F14"/><path d="M416,530.4 L426.9,531.6 L427,529.4 L494,521.9 L561,514.5 L628,507.2 L695,500 L762,492.9 L829,485.8 L896,478.9 L963,472 L1030,465.2 L1097,458.5 L1164,451.9 L1231,445.3 L1298,438.9 L1365,432.5 L1432,426.2 L1499,420.1 L1499,422.1 L1432,428.3 L1365,434.6 L1298,440.9 L1231,447.4 L1164,453.9 L1097,460.5 L1030,467.3 L963,474 L896,480.9 L829,487.9 L762,494.9 L695,502.1 L628,509.3 L561,516.6 L494,524 L427,531.4 L426.9,533.6 L416,532.4Z" fill="#760000"/><path d="M416,532.3 L426.9,533.5 L427,531.3 L494,523.8 L561,516.4 L628,509.1 L695,501.9 L762,494.8 L829,487.7 L896,480.8 L963,473.9 L1030,467.1 L1097,460.4 L1164,453.8 L1231,447.2 L1298,440.8 L1365,434.4 L1432,428.1 L1499,422 L1499,424 L1432,430.2 L1365,436.5 L1298,442.8 L1231,449.3 L1164,455.8 L1097,462.5 L1030,469.2 L963,475.9 L896,482.8 L829,489.8 L762,496.8 L695,504 L628,511.2 L561,518.5 L494,525.9 L427,533.3 L426.9,535.5 L416,534.3Z" fill="#FDB827"/><path d="M416,534.2 L426.9,535.4 L427,533.2 L494,525.7 L561,518.3 L628,511 L695,503.8 L762,496.7 L829,489.6 L896,482.7 L963,475.8 L1030,469 L1097,462.3 L1164,455.7 L1231,449.1 L1298,442.7 L1365,436.3 L1432,430.1 L1499,423.9 L1499,424.7 L1432,430.9 L1365,437.2 L1298,443.6 L1231,450 L1164,456.5 L1097,463.2 L1030,469.9 L963,476.6 L896,483.5 L829,490.5 L762,497.5 L695,504.7 L628,511.9 L561,519.2 L494,526.6 L427,534 L426.9,536.2 L416,535Z" fill="#760000"/><path d="M416,534.9 L426.9,536.1 L427,533.9 L494,526.4 L561,519 L628,511.7 L695,504.5 L762,497.4 L829,490.3 L896,483.4 L963,476.5 L1030,469.7 L1097,463 L1164,456.4 L1231,449.8 L1298,443.4 L1365,437 L1432,430.8 L1499,424.6 L1499,427.2 L1432,433.4 L1365,439.7 L1298,446.1 L1231,452.5 L1164,459 L1097,465.7 L1030,472.4 L963,479.2 L896,486 L829,493 L762,500 L695,507.2 L628,514.4 L561,521.7 L494,529.1 L427,536.5 L426.9,538.7 L416,537.5Z" fill="#A65F14"/><path d="M416,537.4 L426.9,538.6 L427,536.4 L494,528.9 L561,521.5 L628,514.2 L695,507 L762,499.9 L829,492.8 L896,485.9 L963,479 L1030,472.2 L1097,465.5 L1164,458.9 L1231,452.4 L1298,445.9 L1365,439.5 L1432,433.3 L1499,427.1 L1499,432.3 L1432,438.5 L1365,444.8 L1298,451.2 L1231,457.6 L1164,464.2 L1097,470.8 L1030,477.5 L963,484.3 L896,491.1 L829,498.1 L762,505.2 L695,512.3 L628,519.5 L561,526.8 L494,534.2 L427,541.7 L426.9,543.9 L416,542.7Z" fill="#760000"/><path d="M416,542.5 L426.9,543.7 L427,541.5 L494,534 L561,526.7 L628,519.4 L695,512.1 L762,505 L829,498 L896,491 L963,484.1 L1030,477.3 L1097,470.6 L1164,464 L1231,457.5 L1298,451 L1365,444.7 L1432,438.4 L1499,432.2 L1499,434.2 L1432,440.4 L1365,446.7 L1298,453.1 L1231,459.5 L1164,466.1 L1097,472.7 L1030,479.4 L963,486.2 L896,493.1 L829,500 L762,507.1 L695,514.2 L628,521.4 L561,528.7 L494,536.1 L427,543.6 L426.9,545.8 L416,544.6Z" fill="#A65F14"/><path d="M416,544.4 L426.9,545.6 L427,543.4 L494,535.9 L561,528.6 L628,521.3 L695,514 L762,506.9 L829,499.9 L896,492.9 L963,486 L1030,479.2 L1097,472.5 L1164,465.9 L1231,459.4 L1298,452.9 L1365,446.6 L1432,440.3 L1499,434.1 L1499,444.4 L1432,450.6 L1365,456.8 L1298,463.2 L1231,469.7 L1164,476.2 L1097,482.8 L1030,489.5 L963,496.3 L896,503.2 L829,510.1 L762,517.2 L695,524.3 L628,531.5 L561,538.8 L494,546.2 L427,553.7 L426.9,555.9 L416,554.7Z" fill="#760000"/><path d="M416,554.6 L426.9,555.7 L427,553.6 L494,546.1 L561,538.7 L628,531.4 L695,524.2 L762,517 L829,510 L896,503 L963,496.2 L1030,489.4 L1097,482.7 L1164,476 L1231,469.5 L1298,463.1 L1365,456.7 L1432,450.4 L1499,444.2 L1499,446.3 L1432,452.5 L1365,458.8 L1298,465.1 L1231,471.6 L1164,478.1 L1097,484.7 L1030,491.4 L963,498.2 L896,505.1 L829,512.1 L762,519.1 L695,526.2 L628,533.4 L561,540.7 L494,548.1 L427,555.6 L426.9,557.8 L416,556.6Z" fill="#FDB827"/><path d="M416,556.5 L426.9,557.7 L427,555.5 L494,548 L561,540.6 L628,533.3 L695,526.1 L762,518.9 L829,511.9 L896,504.9 L963,498.1 L1030,491.3 L1097,484.6 L1164,477.9 L1231,471.4 L1298,465 L1365,458.6 L1432,452.3 L1499,446.1 L1499,463.6 L1432,469.8 L1365,476.1 L1298,482.5 L1231,488.9 L1164,495.5 L1097,502.1 L1030,508.8 L963,515.6 L896,522.4 L829,529.4 L762,536.5 L695,543.6 L628,550.8 L561,558.1 L494,565.5 L427,573 L426.9,575.2 L416,574Z" fill="#760000"/><path d="M416,573.8 L426.9,575 L427,572.8 L494,565.3 L561,558 L628,550.6 L695,543.4 L762,536.3 L829,529.3 L896,522.3 L963,515.4 L1030,508.6 L1097,501.9 L1164,495.3 L1231,488.8 L1298,482.3 L1365,476 L1432,469.7 L1499,463.5 L1499,470.4 L1432,476.5 L1365,482.8 L1298,489.2 L1231,495.6 L1164,502.2 L1097,508.8 L1030,515.5 L963,522.3 L896,529.2 L829,536.1 L762,543.2 L695,550.3 L628,557.5 L561,564.8 L494,572.2 L427,579.7 L426.9,581.9 L416,580.7Z" fill="#FDB827"/><path d="M416,580.5 L426.9,581.7 L427,579.5 L494,572.1 L561,564.7 L628,557.4 L695,550.2 L762,543 L829,536 L896,529 L963,522.1 L1030,515.3 L1097,508.6 L1164,502 L1231,495.5 L1298,489 L1365,482.7 L1432,476.4 L1499,470.2 L1499,473 L1432,479.2 L1365,485.4 L1298,491.8 L1231,498.2 L1164,504.8 L1097,511.4 L1030,518.1 L963,524.9 L896,531.8 L829,538.7 L762,545.8 L695,552.9 L628,560.1 L561,567.4 L494,574.8 L427,582.3 L426.9,584.5 L416,583.3Z" fill="#A65F14"/><path d="M416,583.1 L426.9,584.3 L427,582.1 L494,574.7 L561,567.3 L628,560 L695,552.8 L762,545.6 L829,538.6 L896,531.6 L963,524.7 L1030,518 L1097,511.3 L1164,504.6 L1231,498.1 L1298,491.6 L1365,485.3 L1432,479 L1499,472.8 L1499,474.2 L1432,480.4 L1365,486.6 L1298,493 L1231,499.5 L1164,506 L1097,512.6 L1030,519.3 L963,526.1 L896,533 L829,539.9 L762,547 L695,554.1 L628,561.3 L561,568.6 L494,576 L427,583.5 L426.9,585.7 L416,584.5Z" fill="#760000"/><path d="M416,584.3 L426.9,585.5 L427,583.3 L494,575.9 L561,568.5 L628,561.2 L695,554 L762,546.8 L829,539.8 L896,532.8 L963,526 L1030,519.2 L1097,512.5 L1164,505.8 L1231,499.3 L1298,492.9 L1365,486.5 L1432,480.2 L1499,474 L1499,478 L1432,484.2 L1365,490.4 L1298,496.8 L1231,503.3 L1164,509.8 L1097,516.4 L1030,523.1 L963,529.9 L896,536.8 L829,543.7 L762,550.8 L695,557.9 L628,565.1 L561,572.4 L494,579.8 L427,587.3 L426.9,589.5 L416,588.3Z" fill="#A65F14"/><path d="M416,588.2 L426.9,589.3 L427,587.2 L494,579.7 L561,572.3 L628,565 L695,557.8 L762,550.6 L829,543.6 L896,536.6 L963,529.8 L1030,523 L1097,516.3 L1164,509.6 L1231,503.1 L1298,496.7 L1365,490.3 L1432,484 L1499,477.8 L1499,488.8 L1432,495 L1365,501.3 L1298,507.6 L1231,514.1 L1164,520.6 L1097,527.3 L1030,534 L963,540.7 L896,547.6 L829,554.6 L762,561.6 L695,568.8 L628,576 L561,583.3 L494,590.7 L427,598.1 L426.9,600.3 L416,599.1Z" fill="#FDB827"/><path d="M416,599 L426.9,600.2 L427,598 L494,590.5 L561,583.1 L628,575.8 L695,568.6 L762,561.5 L829,554.4 L896,547.5 L963,540.6 L1030,533.8 L1097,527.1 L1164,520.5 L1231,513.9 L1298,507.5 L1365,501.1 L1432,494.9 L1499,488.7 L1499,492.6 L1432,498.8 L1365,505.1 L1298,511.5 L1231,517.9 L1164,524.4 L1097,531.1 L1030,537.8 L963,544.6 L896,551.4 L829,558.4 L762,565.4 L695,572.6 L628,579.8 L561,587.1 L494,594.5 L427,601.9 L426.9,604.1 L416,602.9Z" fill="#760000"/><path d="M416,602.8 L426.9,604 L427,601.8 L494,594.3 L561,586.9 L628,579.6 L695,572.4 L762,565.3 L829,558.2 L896,551.3 L963,544.4 L1030,537.6 L1097,530.9 L1164,524.3 L1231,517.8 L1298,511.3 L1365,504.9 L1432,498.7 L1499,492.5 L1499,495.2 L1432,501.4 L1365,507.7 L1298,514.1 L1231,520.5 L1164,527 L1097,533.7 L1030,540.4 L963,547.2 L896,554 L829,561 L762,568 L695,575.2 L628,582.4 L561,589.7 L494,597.1 L427,604.5 L426.9,606.7 L416,605.5Z" fill="#6A69F5"/><path d="M416,605.4 L426.9,606.6 L427,604.4 L494,596.9 L561,589.5 L628,582.2 L695,575 L762,567.9 L829,560.8 L896,553.9 L963,547 L1030,540.2 L1097,533.5 L1164,526.9 L1231,520.4 L1298,513.9 L1365,507.5 L1432,501.3 L1499,495.1 L1499,500.9 L1432,507.1 L1365,513.4 L1298,519.8 L1231,526.2 L1164,532.7 L1097,539.4 L1030,546.1 L963,552.9 L896,559.7 L829,566.7 L762,573.7 L695,580.9 L628,588.1 L561,595.4 L494,602.8 L427,610.2 L426.9,612.4 L416,611.2Z" fill="#40FE8E"/><path d="M416,611.1 L426.9,612.3 L427,610.1 L494,602.6 L561,595.2 L628,587.9 L695,580.7 L762,573.6 L829,566.5 L896,559.6 L963,552.7 L1030,545.9 L1097,539.2 L1164,532.6 L1231,526.1 L1298,519.6 L1365,513.2 L1432,507 L1499,500.8 L1499,502.8 L1432,509 L1365,515.3 L1298,521.7 L1231,528.1 L1164,534.6 L1097,541.3 L1030,548 L963,554.8 L896,561.6 L829,568.6 L762,575.6 L695,582.8 L628,590 L561,597.3 L494,604.7 L427,612.1 L426.9,614.3 L416,613.1Z" fill="#FDB827"/><path d="M416,613 L426.9,614.2 L427,612 L494,604.5 L561,597.1 L628,589.8 L695,582.6 L762,575.5 L829,568.4 L896,561.5 L963,554.6 L1030,547.8 L1097,541.1 L1164,534.5 L1231,528 L1298,521.5 L1365,515.1 L1432,508.9 L1499,502.7 L1499,507.2 L1432,513.4 L1365,519.7 L1298,526.1 L1231,532.5 L1164,539 L1097,545.7 L1030,552.4 L963,559.2 L896,566 L829,573 L762,580 L695,587.2 L628,594.4 L561,601.7 L494,609.1 L427,616.5 L426.9,618.7 L416,617.5Z" fill="#40FE8E"/><path d="M416,617.4 L426.9,618.6 L427,616.4 L494,608.9 L561,601.5 L628,594.2 L695,587 L762,579.9 L829,572.8 L896,565.9 L963,559 L1030,552.2 L1097,545.5 L1164,538.9 L1231,532.4 L1298,525.9 L1365,519.5 L1432,513.3 L1499,507.1 L1499,511 L1432,517.2 L1365,523.5 L1298,529.9 L1231,536.3 L1164,542.8 L1097,549.5 L1030,556.2 L963,563 L896,569.8 L829,576.8 L762,583.8 L695,591 L628,598.2 L561,605.5 L494,612.9 L427,620.3 L426.9,622.5 L416,621.3Z" fill="#6A69F5"/><path d="M416,621.2 L426.9,622.4 L427,620.2 L494,612.7 L561,605.3 L628,598 L695,590.8 L762,583.7 L829,576.6 L896,569.7 L963,562.8 L1030,556 L1097,549.3 L1164,542.7 L1231,536.2 L1298,529.7 L1365,523.3 L1432,517.1 L1499,510.9 L1499,515.4 L1432,521.6 L1365,527.9 L1298,534.3 L1231,540.7 L1164,547.2 L1097,553.9 L1030,560.6 L963,567.4 L896,574.2 L829,581.2 L762,588.2 L695,595.4 L628,602.6 L561,609.9 L494,617.3 L427,624.8 L426.9,626.9 L416,625.8Z" fill="#6A4880"/><path d="M416,625.6 L426.9,626.8 L427,624.6 L494,617.1 L561,609.7 L628,602.4 L695,595.2 L762,588.1 L829,581 L896,574.1 L963,567.2 L1030,560.4 L1097,553.7 L1164,547.1 L1231,540.6 L1298,534.1 L1365,527.7 L1432,521.5 L1499,515.3 L1499,518.6 L1432,524.8 L1365,531.1 L1298,537.5 L1231,543.9 L1164,550.4 L1097,557.1 L1030,563.8 L963,570.6 L896,577.4 L829,584.4 L762,591.4 L695,598.6 L628,605.8 L561,613.1 L494,620.5 L427,627.9 L426.9,630.1 L416,628.9Z" fill="#6A69F5"/><path d="M416,628.8 L426.9,630 L427,627.8 L494,620.3 L561,612.9 L628,605.6 L695,598.4 L762,591.3 L829,584.2 L896,577.3 L963,570.4 L1030,563.6 L1097,556.9 L1164,550.3 L1231,543.8 L1298,537.3 L1365,530.9 L1432,524.7 L1499,518.5 L1499,526.9 L1432,533.1 L1365,539.4 L1298,545.8 L1231,552.2 L1164,558.7 L1097,565.4 L1030,572.1 L963,578.9 L896,585.7 L829,592.7 L762,599.7 L695,606.9 L628,614.1 L561,621.4 L494,628.8 L427,636.2 L426.9,638.4 L416,637.2Z" fill="#6A4880"/><path d="M416,637.1 L426.9,638.3 L427,636.1 L494,628.6 L561,621.2 L628,613.9 L695,606.7 L762,599.6 L829,592.5 L896,585.6 L963,578.7 L1030,571.9 L1097,565.2 L1164,558.6 L1231,552.1 L1298,545.6 L1365,539.2 L1432,533 L1499,526.8 L1499,529.4 L1432,535.6 L1365,541.9 L1298,548.3 L1231,554.7 L1164,561.2 L1097,567.9 L1030,574.6 L963,581.4 L896,588.2 L829,595.2 L762,602.2 L695,609.4 L628,616.6 L561,623.9 L494,631.3 L427,638.8 L426.9,640.9 L416,639.8Z" fill="#5A58D0"/><path d="M416,639.6 L426.9,640.8 L427,638.6 L494,631.1 L561,623.7 L628,616.4 L695,609.2 L762,602.1 L829,595 L896,588.1 L963,581.2 L1030,574.4 L1097,567.7 L1164,561.1 L1231,554.6 L1298,548.1 L1365,541.7 L1432,535.5 L1499,529.3 L1499,535.7 L1432,541.9 L1365,548.2 L1298,554.6 L1231,561 L1164,567.5 L1097,574.2 L1030,580.9 L963,587.7 L896,594.5 L829,601.5 L762,608.5 L695,615.7 L628,622.9 L561,630.2 L494,637.6 L427,645 L426.9,647.2 L416,646Z" fill="#6A4880"/><path d="M416,645.9 L426.9,647.1 L427,644.9 L494,637.4 L561,630 L628,622.7 L695,615.5 L762,608.4 L829,601.3 L896,594.4 L963,587.5 L1030,580.7 L1097,574 L1164,567.4 L1231,560.9 L1298,554.4 L1365,548 L1432,541.8 L1499,535.6 L1499,538.2 L1432,544.4 L1365,550.7 L1298,557.1 L1231,563.5 L1164,570 L1097,576.7 L1030,583.4 L963,590.2 L896,597 L829,604 L762,611 L695,618.2 L628,625.4 L561,632.7 L494,640.1 L427,647.5 L426.9,649.7 L416,648.5Z" fill="#6A69F5"/><path d="M416,648.4 L426.9,649.6 L427,647.4 L494,639.9 L561,632.5 L628,625.2 L695,618 L762,610.9 L829,603.8 L896,596.9 L963,590 L1030,583.2 L1097,576.5 L1164,569.9 L1231,563.4 L1298,556.9 L1365,550.5 L1432,544.3 L1499,538.1 L1499,540.8 L1432,547 L1365,553.3 L1298,559.7 L1231,566.1 L1164,572.6 L1097,579.3 L1030,586 L963,592.8 L896,599.6 L829,606.6 L762,613.6 L695,620.8 L628,628 L561,635.3 L494,642.7 L427,650.1 L426.9,652.3 L416,651.1Z" fill="#6A4880"/><path d="M416,651 L426.9,652.2 L427,650 L494,642.5 L561,635.1 L628,627.8 L695,620.6 L762,613.5 L829,606.4 L896,599.5 L963,592.6 L1030,585.8 L1097,579.1 L1164,572.5 L1231,566 L1298,559.5 L1365,553.1 L1432,546.9 L1499,540.7 L1499,544 L1432,550.2 L1365,556.5 L1298,562.9 L1231,569.3 L1164,575.8 L1097,582.5 L1030,589.2 L963,596 L896,602.8 L829,609.8 L762,616.8 L695,624 L628,631.2 L561,638.5 L494,645.9 L427,653.3 L426.9,655.5 L416,654.3Z" fill="#6A69F5"/><path d="M416,654.2 L426.9,655.4 L427,653.2 L494,645.7 L561,638.3 L628,631 L695,623.8 L762,616.7 L829,609.6 L896,602.7 L963,595.8 L1030,589 L1097,582.3 L1164,575.7 L1231,569.2 L1298,562.7 L1365,556.3 L1432,550.1 L1499,543.9 L1499,547.2 L1432,553.4 L1365,559.7 L1298,566.1 L1231,572.5 L1164,579 L1097,585.7 L1030,592.4 L963,599.2 L896,606 L829,613 L762,620 L695,627.2 L628,634.4 L561,641.7 L494,649.1 L427,656.5 L426.9,658.7 L416,657.5Z" fill="#6A4880"/><path d="M416,657.4 L426.9,658.6 L427,656.4 L494,648.9 L561,641.5 L628,634.2 L695,627 L762,619.9 L829,612.8 L896,605.9 L963,599 L1030,592.2 L1097,585.5 L1164,578.9 L1231,572.4 L1298,565.9 L1365,559.5 L1432,553.3 L1499,547.1 L1499,550.4 L1432,556.6 L1365,562.9 L1298,569.3 L1231,575.7 L1164,582.2 L1097,588.9 L1030,595.6 L963,602.4 L896,609.2 L829,616.2 L762,623.2 L695,630.4 L628,637.6 L561,644.9 L494,652.3 L427,659.8 L426.9,661.9 L416,660.8Z" fill="#6A69F5"/><path d="M416,660.6 L426.9,661.8 L427,659.6 L494,652.1 L561,644.7 L628,637.4 L695,630.2 L762,623.1 L829,616 L896,609.1 L963,602.2 L1030,595.4 L1097,588.7 L1164,582.1 L1231,575.6 L1298,569.1 L1365,562.7 L1432,556.5 L1499,550.3 L1499,552.2 L1432,558.4 L1365,564.7 L1298,571.1 L1231,577.5 L1164,584 L1097,590.7 L1030,597.4 L963,604.2 L896,611 L829,618 L762,625 L695,632.2 L628,639.4 L561,646.7 L494,654.1 L427,661.5 L426.9,663.7 L416,662.5Z" fill="#6A4880"/><path d="M416,662.4 L426.9,663.6 L427,661.4 L494,653.9 L561,646.5 L628,639.2 L695,632 L762,624.9 L829,617.8 L896,610.9 L963,604 L1030,597.2 L1097,590.5 L1164,583.9 L1231,577.4 L1298,570.9 L1365,564.5 L1432,558.3 L1499,552.1 L1499,554.2 L1432,560.4 L1365,566.7 L1298,573.1 L1231,579.5 L1164,586 L1097,592.7 L1030,599.4 L963,606.2 L896,613 L829,620 L762,627 L695,634.2 L628,641.4 L561,648.7 L494,656.1 L427,663.5 L426.9,665.7 L416,664.5Z" fill="#6A69F5"/><path d="M416,664.4 L426.9,665.6 L427,663.4 L494,655.9 L561,648.5 L628,641.2 L695,634 L762,626.9 L829,619.8 L896,612.9 L963,606 L1030,599.2 L1097,592.5 L1164,585.9 L1231,579.4 L1298,572.9 L1365,566.5 L1432,560.3 L1499,554.1 L1499,555.4 L1432,561.6 L1365,567.9 L1298,574.3 L1231,580.7 L1164,587.2 L1097,593.9 L1030,600.6 L963,607.4 L896,614.2 L829,621.2 L762,628.2 L695,635.4 L628,642.6 L561,649.9 L494,657.3 L427,664.8 L426.9,666.9 L416,665.8Z" fill="#40FE8E"/><path d="M416,665.6 L426.9,666.8 L427,664.6 L494,657.1 L561,649.7 L628,642.4 L695,635.2 L762,628.1 L829,621 L896,614.1 L963,607.2 L1030,600.4 L1097,593.7 L1164,587.1 L1231,580.6 L1298,574.1 L1365,567.7 L1432,561.5 L1499,555.3 L1499,556.7 L1432,562.9 L1365,569.2 L1298,575.6 L1231,582 L1164,588.5 L1097,595.2 L1030,601.9 L963,608.7 L896,615.5 L829,622.5 L762,629.5 L695,636.7 L628,643.9 L561,651.2 L494,658.6 L427,666 L426.9,668.2 L416,667Z" fill="#6A69F5"/><path d="M416,666.9 L426.9,668.1 L427,665.9 L494,658.4 L561,651 L628,643.7 L695,636.5 L762,629.4 L829,622.3 L896,615.4 L963,608.5 L1030,601.7 L1097,595 L1164,588.4 L1231,581.9 L1298,575.4 L1365,569 L1432,562.8 L1499,556.6 L1499,558 L1432,564.2 L1365,570.5 L1298,576.9 L1231,583.3 L1164,589.8 L1097,596.5 L1030,603.2 L963,610 L896,616.8 L829,623.8 L762,630.8 L695,638 L628,645.2 L561,652.5 L494,659.9 L427,667.3 L426.9,669.5 L416,668.3Z" fill="#40FE8E"/><path d="M416,668.2 L426.9,669.4 L427,667.2 L494,659.7 L561,652.3 L628,645 L695,637.8 L762,630.7 L829,623.6 L896,616.7 L963,609.8 L1030,603 L1097,596.3 L1164,589.7 L1231,583.2 L1298,576.7 L1365,570.3 L1432,564.1 L1499,557.9 L1499,559.2 L1432,565.4 L1365,571.7 L1298,578.1 L1231,584.5 L1164,591 L1097,597.7 L1030,604.4 L963,611.2 L896,618 L829,625 L762,632 L695,639.2 L628,646.4 L561,653.7 L494,661.1 L427,668.5 L426.9,670.7 L416,669.5Z" fill="#6A69F5"/><path d="M416,669.4 L426.9,670.6 L427,668.4 L494,660.9 L561,653.5 L628,646.2 L695,639 L762,631.9 L829,624.8 L896,617.9 L963,611 L1030,604.2 L1097,597.5 L1164,590.9 L1231,584.4 L1298,577.9 L1365,571.5 L1432,565.3 L1499,559.1 L1499,561.2 L1432,567.4 L1365,573.7 L1298,580.1 L1231,586.5 L1164,593 L1097,599.7 L1030,606.4 L963,613.2 L896,620 L829,627 L762,634 L695,641.2 L628,648.4 L561,655.7 L494,663.1 L427,670.5 L426.9,672.7 L416,671.5Z" fill="#40FE8E"/><path d="M416,671.4 L426.9,672.6 L427,670.4 L494,662.9 L561,655.5 L628,648.2 L695,641 L762,633.9 L829,626.8 L896,619.9 L963,613 L1030,606.2 L1097,599.5 L1164,592.9 L1231,586.4 L1298,579.9 L1365,573.5 L1432,567.3 L1499,561.1 L1499,566.9 L1432,573.1 L1365,579.4 L1298,585.8 L1231,592.2 L1164,598.7 L1097,605.4 L1030,612.1 L963,618.9 L896,625.7 L829,632.7 L762,639.7 L695,646.9 L628,654.1 L561,661.4 L494,668.8 L427,676.2 L426.9,678.4 L416,677.2Z" fill="#6A69F5"/><path d="M416,677.1 L426.9,678.3 L427,676.1 L494,668.6 L561,661.2 L628,653.9 L695,646.7 L762,639.6 L829,632.5 L896,625.6 L963,618.7 L1030,611.9 L1097,605.2 L1164,598.6 L1231,592.1 L1298,585.6 L1365,579.2 L1432,573 L1499,566.8 L1499,568.2 L1432,574.4 L1365,580.7 L1298,587.1 L1231,593.5 L1164,600 L1097,606.7 L1030,613.4 L963,620.2 L896,627 L829,634 L762,641 L695,648.2 L628,655.4 L561,662.7 L494,670.1 L427,677.5 L426.9,679.7 L416,678.5Z" fill="#4A8CA8"/><path d="M416,678.4 L426.9,679.6 L427,677.4 L494,669.9 L561,662.5 L628,655.2 L695,648 L762,640.9 L829,633.8 L896,626.9 L963,620 L1030,613.2 L1097,606.5 L1164,599.9 L1231,593.4 L1298,586.9 L1365,580.5 L1432,574.3 L1499,568.1 L1499,573.8 L1432,580 L1365,586.3 L1298,592.7 L1231,599.1 L1164,605.6 L1097,612.3 L1030,619 L963,625.8 L896,632.6 L829,639.6 L762,646.6 L695,653.8 L628,661 L561,668.3 L494,675.7 L427,683.1 L426.9,685.3 L416,684.1Z" fill="#6A69F5"/><path d="M416,684 L426.9,685.2 L427,683 L494,675.5 L561,668.1 L628,660.8 L695,653.6 L762,646.5 L829,639.4 L896,632.5 L963,625.6 L1030,618.8 L1097,612.1 L1164,605.5 L1231,599 L1298,592.5 L1365,586.1 L1432,579.9 L1499,573.7 L1499,576.2 L1432,582.4 L1365,588.7 L1298,595.1 L1231,601.5 L1164,608 L1097,614.7 L1030,621.4 L963,628.2 L896,635 L829,642 L762,649 L695,656.2 L628,663.4 L561,670.7 L494,678.1 L427,685.5 L426.9,687.7 L416,686.5Z" fill="#6A4880"/><path d="M416,686.4 L426.9,687.6 L427,685.4 L494,677.9 L561,670.5 L628,663.2 L695,656 L762,648.9 L829,641.8 L896,634.9 L963,628 L1030,621.2 L1097,614.5 L1164,607.9 L1231,601.4 L1298,594.9 L1365,588.5 L1432,582.3 L1499,576.1 L1499,578.2 L1432,584.4 L1365,590.7 L1298,597.1 L1231,603.5 L1164,610 L1097,616.7 L1030,623.4 L963,630.2 L896,637 L829,644 L762,651 L695,658.2 L628,665.4 L561,672.7 L494,680.1 L427,687.5 L426.9,689.7 L416,688.5Z" fill="#5A58C8"/><path d="M416,688.4 L426.9,689.6 L427,687.4 L494,679.9 L561,672.5 L628,665.2 L695,658 L762,650.9 L829,643.8 L896,636.9 L963,630 L1030,623.2 L1097,616.5 L1164,609.9 L1231,603.4 L1298,596.9 L1365,590.5 L1432,584.3 L1499,578.1 L1499,579.5 L1432,585.7 L1365,592 L1298,598.4 L1231,604.8 L1164,611.3 L1097,618 L1030,624.7 L963,631.5 L896,638.3 L829,645.3 L762,652.3 L695,659.5 L628,666.7 L561,674 L494,681.4 L427,688.8 L426.9,691 L416,689.8Z" fill="#6A4880"/><path d="M416,689.7 L426.9,690.9 L427,688.7 L494,681.2 L561,673.8 L628,666.5 L695,659.3 L762,652.2 L829,645.1 L896,638.2 L963,631.3 L1030,624.5 L1097,617.8 L1164,611.2 L1231,604.7 L1298,598.2 L1365,591.8 L1432,585.6 L1499,579.4 L1499,582.7 L1432,588.9 L1365,595.2 L1298,601.6 L1231,608 L1164,614.5 L1097,621.2 L1030,627.9 L963,634.7 L896,641.5 L829,648.5 L762,655.5 L695,662.7 L628,669.9 L561,677.2 L494,684.6 L427,692 L426.9,694.2 L416,693Z" fill="#6060D8"/><path d="M416,692.9 L426.9,694.1 L427,691.9 L494,684.4 L561,677 L628,669.7 L695,662.5 L762,655.4 L829,648.3 L896,641.4 L963,634.5 L1030,627.7 L1097,621 L1164,614.4 L1231,607.9 L1298,601.4 L1365,595 L1432,588.8 L1499,582.6 L1499,583.4 L1432,589.6 L1365,595.9 L1298,602.3 L1231,608.7 L1164,615.2 L1097,621.9 L1030,628.6 L963,635.4 L896,642.2 L829,649.2 L762,656.2 L695,663.4 L628,670.6 L561,677.9 L494,685.3 L427,692.8 L426.9,694.9 L416,693.8Z" fill="#6A4880"/><path d="M416,693.6 L426.9,694.8 L427,692.6 L494,685.1 L561,677.7 L628,670.4 L695,663.2 L762,656.1 L829,649 L896,642.1 L963,635.2 L1030,628.4 L1097,621.7 L1164,615.1 L1231,608.6 L1298,602.1 L1365,595.7 L1432,589.5 L1499,583.3 L1499,585.2 L1432,591.4 L1365,597.7 L1298,604.1 L1231,610.5 L1164,617 L1097,623.7 L1030,630.4 L963,637.2 L896,644 L829,651 L762,658 L695,665.2 L628,672.4 L561,679.7 L494,687.1 L427,694.5 L426.9,696.7 L416,695.5Z" fill="#5A58C8"/><path d="M416,695.4 L426.9,696.6 L427,694.4 L494,686.9 L561,679.5 L628,672.2 L695,665 L762,657.9 L829,650.8 L896,643.9 L963,637 L1030,630.2 L1097,623.5 L1164,616.9 L1231,610.4 L1298,603.9 L1365,597.5 L1432,591.3 L1499,585.1 L1499,588.7 L1432,594.9 L1365,601.2 L1298,607.6 L1231,614 L1164,620.5 L1097,627.2 L1030,633.9 L963,640.7 L896,647.5 L829,654.5 L762,661.5 L695,668.7 L628,675.9 L561,683.2 L494,690.6 L427,698 L426.9,700.2 L416,699Z" fill="#6A4880"/><path d="M416,698.9 L426.9,700.1 L427,697.9 L494,690.4 L561,683 L628,675.7 L695,668.5 L762,661.4 L829,654.3 L896,647.4 L963,640.5 L1030,633.7 L1097,627 L1164,620.4 L1231,613.9 L1298,607.4 L1365,601 L1432,594.8 L1499,588.6 L1499,589.5 L1432,595.7 L1365,602 L1298,608.4 L1231,614.8 L1164,621.3 L1097,628 L1030,634.7 L963,641.5 L896,648.3 L829,655.3 L762,662.3 L695,669.5 L628,676.7 L561,684 L494,691.4 L427,698.8 L426.9,701 L416,699.8Z" fill="#6A5AA8"/><path d="M416,699.7 L426.9,700.9 L427,698.7 L494,691.2 L561,683.8 L628,676.5 L695,669.3 L762,662.2 L829,655.1 L896,648.2 L963,641.3 L1030,634.5 L1097,627.8 L1164,621.2 L1231,614.7 L1298,608.2 L1365,601.8 L1432,595.6 L1499,589.4 L1499,592.4 L1432,598.6 L1365,604.9 L1298,611.3 L1231,617.7 L1164,624.2 L1097,630.9 L1030,637.6 L963,644.4 L896,651.2 L829,658.2 L762,665.2 L695,672.4 L628,679.6 L561,686.9 L494,694.3 L427,701.8 L426.9,703.9 L416,702.8Z" fill="#6A4880"/><path d="M416,702.6 L426.9,703.8 L427,701.6 L494,694.1 L561,686.7 L628,679.4 L695,672.2 L762,665.1 L829,658 L896,651.1 L963,644.2 L1030,637.4 L1097,630.7 L1164,624.1 L1231,617.6 L1298,611.1 L1365,604.7 L1432,598.5 L1499,592.3 L1499,593.2 L1432,599.4 L1365,605.7 L1298,612.1 L1231,618.5 L1164,625 L1097,631.7 L1030,638.4 L963,645.2 L896,652 L829,659 L762,666 L695,673.2 L628,680.4 L561,687.7 L494,695.1 L427,702.5 L426.9,704.7 L416,703.5Z" fill="#6A5AA8"/><path d="M416,703.4 L426.9,704.6 L427,702.4 L494,694.9 L561,687.5 L628,680.2 L695,673 L762,665.9 L829,658.8 L896,651.9 L963,645 L1030,638.2 L1097,631.5 L1164,624.9 L1231,618.4 L1298,611.9 L1365,605.5 L1432,599.3 L1499,593.1 L1499,597.5 L1432,603.7 L1365,610 L1298,616.4 L1231,622.8 L1164,629.3 L1097,636 L1030,642.7 L963,649.5 L896,656.3 L829,663.3 L762,670.3 L695,677.5 L628,684.7 L561,692 L494,699.4 L427,706.8 L426.9,709 L416,707.8Z" fill="#6A4880"/><path d="M416,707.7 L426.9,708.9 L427,706.7 L494,699.2 L561,691.8 L628,684.5 L695,677.3 L762,670.2 L829,663.1 L896,656.2 L963,649.3 L1030,642.5 L1097,635.8 L1164,629.2 L1231,622.7 L1298,616.2 L1365,609.8 L1432,603.6 L1499,597.4 L1499,598.2 L1432,604.4 L1365,610.7 L1298,617.1 L1231,623.5 L1164,630 L1097,636.7 L1030,643.4 L963,650.2 L896,657 L829,664 L762,671 L695,678.2 L628,685.4 L561,692.7 L494,700.1 L427,707.5 L426.9,709.7 L416,708.5Z" fill="#6A5AA8"/><path d="M416,708.4 L426.9,709.6 L427,707.4 L494,699.9 L561,692.5 L628,685.2 L695,678 L762,670.9 L829,663.8 L896,656.9 L963,650 L1030,643.2 L1097,636.5 L1164,629.9 L1231,623.4 L1298,616.9 L1365,610.5 L1432,604.3 L1499,598.1 L1499,649.7 L1432,655.9 L1365,662.1 L1298,668.5 L1231,675 L1164,681.5 L1097,688.1 L1030,694.8 L963,701.6 L896,708.5 L829,715.4 L762,722.5 L695,729.6 L628,736.8 L561,744.1 L494,751.5 L427,759 L426.9,761.2 L416,760Z" fill="#6A4880"/>
<path d="M416,148.3 L426.9,149.5 L427,147.3 L494,139.8 L561,132.4 L628,125.1 L695,117.9 L762,110.8 L829,103.7 L896,96.8 L963,89.9 L1030,83.1 L1097,76.4 L1164,69.8 L1231,63.3 L1298,56.8 L1365,50.4 L1432,44.2 L1499,38" stroke="#fff" stroke-width="1.6" fill="none" stroke-dasharray="9,3,3,3"/><path d="M416,148.3 L470,154.4" stroke="#fff" stroke-width="1.6" fill="none" stroke-dasharray="16,2.4" stroke-dashoffset="6.6"/><path d="M416,310.8 L426.9,312 L427,309.8 L494,302.3 L561,294.9 L628,287.6 L695,280.4 L762,273.3 L829,266.2 L896,259.3 L963,252.4 L1030,245.6 L1097,238.9 L1164,232.3 L1231,225.8 L1298,219.3 L1365,212.9 L1432,206.7 L1499,200.5" stroke="#fff" stroke-width="1.6" fill="none" stroke-dasharray="9,3,3,3"/><path d="M416,310.8 L470,316.5" stroke="#fff" stroke-width="1.6" fill="none" stroke-dasharray="16,2.4" stroke-dashoffset="6.6"/><path d="M416,601.3 L426.9,602.5 L427,600.3 L494,592.8 L561,585.4 L628,578.1 L695,570.9 L762,563.8 L829,556.7 L896,549.8 L963,542.9 L1030,536.1 L1097,529.4 L1164,522.8 L1231,516.3 L1298,509.8 L1365,503.4 L1432,497.2 L1499,491" stroke="#fff" stroke-width="2.2" fill="none" stroke-dasharray="9,9"/><path d="M416,601.3 L472,606.5" stroke="#fff" stroke-width="2.2" fill="none" stroke-dasharray="12.4,5.6" stroke-dashoffset="4"/>
<path d="M472,9 L472,88 L471.9,184.7 L471.9,233 L470.7,281.3 L469.9,296.3 L469.3,312 L467.8,327 L466.6,342.4 L464.8,357.6 L462.9,372 L461,386.5 L459,400 L456.8,413 L454.5,426 L451,438.8 L448.3,451 L445.8,461.6 L443,473 L440.3,483.3 L437.4,494 L434.8,502.8 L431.9,511.9 L429.8,519.3 L428.2,526.3 L427,532.9 L427,538.7 L434.8,549.4 L441.4,552.7 L452.9,552.7 L464.8,550.6 L477.2,549 L489.5,546.9 L501.9,544.8 L514.7,542.4 L527.1,542 L539.8,542.4 L552.5,542.9 L564.4,542.4 L577.1,541.6 L589.5,540.8 L602.2,539.7 L614.8,538.4 L627.1,535.7 L639.8,532.5 L652.1,530.5 L664.8,529.7 L677.1,528 L689.5,526.5 L702.1,524.9 L714.4,522.5 L727.1,521.3 L739.5,520.2 L752,519.4 L764.4,518.6 L777.1,517.8 L789.4,516.8 L801.7,516 L814.4,515.7 L827.1,514.4 L839.8,512 L852.2,508.9 L864.8,506.8 L877.1,504.6 L889.8,502.5 L902,501.7 L914.4,500.5 L927.1,498.9 L939.5,498.3 L952,497.3 L964.4,496.2 L977.1,495.4 L989.5,493.8 L1002,493 L1014.4,491.9 L1027.1,491 L1039.8,489.4 L1052.5,488.1 L1064.9,488.6 L1077.5,488.4 L1089.8,487.6 L1102.5,485.7 L1114.9,484.1 L1127.6,483.7 L1140.2,482.5 L1152.5,481.4 L1164.9,479.4 L1177.6,477.3 L1190.2,475.7 L1202.5,474.6 L1215.2,473.8 L1227.6,473 L1240.2,472.5 L1252.5,473 L1265.2,472.5 L1277.1,471.9 L1289.8,471 L1302.5,469.9 L1315.2,468.2 L1327.5,466 L1339.8,463.9 L1352.5,462.3 L1365.2,461.8 L1377.6,460.7 L1390.2,460.7 L1402.5,460.2 L1414.9,459.1 L1427.6,458 L1440.2,456 L1452.5,453.9 L1465.2,450.9 L1477.6,448 L1490.2,444.8 L1498.9,443.3" stroke="#fff" stroke-width="4.2" fill="none" stroke-linejoin="round"/>
<g fill="#fff"><circle cx="472" cy="88" r="4.4"/><circle cx="471.9" cy="184.7" r="4.4"/><circle cx="471.9" cy="233" r="4.4"/><circle cx="470.7" cy="281.3" r="4.4"/><circle cx="469.9" cy="296.3" r="4.4"/><circle cx="469.3" cy="312" r="4.4"/><circle cx="467.8" cy="327" r="4.4"/><circle cx="466.6" cy="342.4" r="4.4"/><circle cx="464.8" cy="357.6" r="4.4"/><circle cx="462.9" cy="372" r="4.4"/><circle cx="461" cy="386.5" r="4.4"/><circle cx="459" cy="400" r="4.4"/><circle cx="456.8" cy="413" r="4.4"/><circle cx="454.5" cy="426" r="4.4"/><circle cx="451" cy="438.8" r="4.4"/><circle cx="448.3" cy="451" r="4.4"/><circle cx="445.8" cy="461.6" r="4.4"/><circle cx="443" cy="473" r="4.4"/><circle cx="440.3" cy="483.3" r="4.4"/><circle cx="437.4" cy="494" r="4.4"/><circle cx="434.8" cy="502.8" r="4.4"/><circle cx="431.9" cy="511.9" r="4.4"/><circle cx="429.8" cy="519.3" r="4.4"/><circle cx="428.2" cy="526.3" r="4.4"/><circle cx="427" cy="532.9" r="4.4"/><circle cx="427" cy="538.7" r="4.4"/><circle cx="434.8" cy="549.4" r="4.4"/><circle cx="441.4" cy="552.7" r="4.4"/><circle cx="452.9" cy="552.7" r="4.4"/><circle cx="464.8" cy="550.6" r="4.4"/><circle cx="477.2" cy="549" r="4.4"/><circle cx="489.5" cy="546.9" r="4.4"/><circle cx="501.9" cy="544.8" r="4.4"/><circle cx="514.7" cy="542.4" r="4.4"/><circle cx="527.1" cy="542" r="4.4"/><circle cx="539.8" cy="542.4" r="4.4"/><circle cx="552.5" cy="542.9" r="4.4"/><circle cx="564.4" cy="542.4" r="4.4"/><circle cx="577.1" cy="541.6" r="4.4"/><circle cx="589.5" cy="540.8" r="4.4"/><circle cx="602.2" cy="539.7" r="4.4"/><circle cx="614.8" cy="538.4" r="4.4"/><circle cx="627.1" cy="535.7" r="4.4"/><circle cx="639.8" cy="532.5" r="4.4"/><circle cx="652.1" cy="530.5" r="4.4"/><circle cx="664.8" cy="529.7" r="4.4"/><circle cx="677.1" cy="528" r="4.4"/><circle cx="689.5" cy="526.5" r="4.4"/><circle cx="702.1" cy="524.9" r="4.4"/><circle cx="714.4" cy="522.5" r="4.4"/><circle cx="727.1" cy="521.3" r="4.4"/><circle cx="739.5" cy="520.2" r="4.4"/><circle cx="752" cy="519.4" r="4.4"/><circle cx="764.4" cy="518.6" r="4.4"/><circle cx="777.1" cy="517.8" r="4.4"/><circle cx="789.4" cy="516.8" r="4.4"/><circle cx="801.7" cy="516" r="4.4"/><circle cx="814.4" cy="515.7" r="4.4"/><circle cx="827.1" cy="514.4" r="4.4"/><circle cx="839.8" cy="512" r="4.4"/><circle cx="852.2" cy="508.9" r="4.4"/><circle cx="864.8" cy="506.8" r="4.4"/><circle cx="877.1" cy="504.6" r="4.4"/><circle cx="889.8" cy="502.5" r="4.4"/><circle cx="902" cy="501.7" r="4.4"/><circle cx="914.4" cy="500.5" r="4.4"/><circle cx="927.1" cy="498.9" r="4.4"/><circle cx="939.5" cy="498.3" r="4.4"/><circle cx="952" cy="497.3" r="4.4"/><circle cx="964.4" cy="496.2" r="4.4"/><circle cx="977.1" cy="495.4" r="4.4"/><circle cx="989.5" cy="493.8" r="4.4"/><circle cx="1002" cy="493" r="4.4"/><circle cx="1014.4" cy="491.9" r="4.4"/><circle cx="1027.1" cy="491" r="4.4"/><circle cx="1039.8" cy="489.4" r="4.4"/><circle cx="1052.5" cy="488.1" r="4.4"/><circle cx="1064.9" cy="488.6" r="4.4"/><circle cx="1077.5" cy="488.4" r="4.4"/><circle cx="1089.8" cy="487.6" r="4.4"/><circle cx="1102.5" cy="485.7" r="4.4"/><circle cx="1114.9" cy="484.1" r="4.4"/><circle cx="1127.6" cy="483.7" r="4.4"/><circle cx="1140.2" cy="482.5" r="4.4"/><circle cx="1152.5" cy="481.4" r="4.4"/><circle cx="1164.9" cy="479.4" r="4.4"/><circle cx="1177.6" cy="477.3" r="4.4"/><circle cx="1190.2" cy="475.7" r="4.4"/><circle cx="1202.5" cy="474.6" r="4.4"/><circle cx="1215.2" cy="473.8" r="4.4"/><circle cx="1227.6" cy="473" r="4.4"/><circle cx="1240.2" cy="472.5" r="4.4"/><circle cx="1252.5" cy="473" r="4.4"/><circle cx="1265.2" cy="472.5" r="4.4"/><circle cx="1277.1" cy="471.9" r="4.4"/><circle cx="1289.8" cy="471" r="4.4"/><circle cx="1302.5" cy="469.9" r="4.4"/><circle cx="1315.2" cy="468.2" r="4.4"/><circle cx="1327.5" cy="466" r="4.4"/><circle cx="1339.8" cy="463.9" r="4.4"/><circle cx="1352.5" cy="462.3" r="4.4"/><circle cx="1365.2" cy="461.8" r="4.4"/><circle cx="1377.6" cy="460.7" r="4.4"/><circle cx="1390.2" cy="460.7" r="4.4"/><circle cx="1402.5" cy="460.2" r="4.4"/><circle cx="1414.9" cy="459.1" r="4.4"/><circle cx="1427.6" cy="458" r="4.4"/><circle cx="1440.2" cy="456" r="4.4"/><circle cx="1452.5" cy="453.9" r="4.4"/><circle cx="1465.2" cy="450.9" r="4.4"/><circle cx="1477.6" cy="448" r="4.4"/><circle cx="1490.2" cy="444.8" r="4.4"/><circle cx="1498.9" cy="443.3" r="4.4"/></g>
</g>
<g><text x="61.5" y="88.6" font-size="12.5" text-anchor="end" letter-spacing="0.5" >7400</text><text x="306.5" y="37.6" font-size="12.5" text-anchor="end" letter-spacing="0.5" >7400</text><text x="61.5" y="190.6" font-size="12.5" text-anchor="end" letter-spacing="0.5" >7600</text><text x="306.5" y="139.6" font-size="12.5" text-anchor="end" letter-spacing="0.5" >7600</text><text x="61.5" y="292.6" font-size="12.5" text-anchor="end" letter-spacing="0.5" >7800</text><text x="306.5" y="241.6" font-size="12.5" text-anchor="end" letter-spacing="0.5" >7800</text><text x="61.5" y="394.6" font-size="12.5" text-anchor="end" letter-spacing="0.5" >8000</text><text x="306.5" y="343.6" font-size="12.5" text-anchor="end" letter-spacing="0.5" >8000</text><text x="61.5" y="495.6" font-size="12.5" text-anchor="end" letter-spacing="0.5" >8200</text><text x="306.5" y="444.6" font-size="12.5" text-anchor="end" letter-spacing="0.5" >8200</text><text x="61.5" y="597.6" font-size="12.5" text-anchor="end" letter-spacing="0.5" >8400</text><text x="306.5" y="546.6" font-size="12.5" text-anchor="end" letter-spacing="0.5" >8400</text><text x="61.5" y="699.6" font-size="12.5" text-anchor="end" letter-spacing="0.5" >8600</text><text x="306.5" y="648.6" font-size="12.5" text-anchor="end" letter-spacing="0.5" >8600</text><text x="63" y="749.8" font-size="12.5" text-anchor="middle" letter-spacing="0.5" >0</text><text x="110.5" y="749.8" font-size="12.5" text-anchor="middle" letter-spacing="0.5" >50</text><text x="158" y="749.8" font-size="12.5" text-anchor="middle" letter-spacing="0.5" >100</text><text x="205" y="749.8" font-size="12.5" text-anchor="middle" letter-spacing="0.5" >150</text><text x="416" y="750" font-size="12.5" text-anchor="middle" letter-spacing="0.5" >0</text><text x="548.1" y="750" font-size="12.5" text-anchor="middle" letter-spacing="0.5" >1000</text><text x="680.2" y="750" font-size="12.5" text-anchor="middle" letter-spacing="0.5" >2000</text><text x="812.3" y="750" font-size="12.5" text-anchor="middle" letter-spacing="0.5" >3000</text><text x="944.4" y="750" font-size="12.5" text-anchor="middle" letter-spacing="0.5" >4000</text><text x="1076.5" y="750" font-size="12.5" text-anchor="middle" letter-spacing="0.5" >5000</text><text x="1208.6" y="750" font-size="12.5" text-anchor="middle" letter-spacing="0.5" >6000</text><text x="1340.7" y="750" font-size="12.5" text-anchor="middle" letter-spacing="0.5" >7000</text><text x="1472.8" y="750" font-size="12.5" text-anchor="middle" letter-spacing="0.5" >8000</text><text x="1604.9" y="750" font-size="12.5" text-anchor="middle" letter-spacing="0.5" >9000</text><text x="134.3" y="776.6" font-size="13.5" text-anchor="middle" letter-spacing="0.3" >GR</text><text x="957.5" y="776.7" font-size="14" text-anchor="middle" letter-spacing="0.8" >SH to Point XY Offset (ft)</text><text transform="translate(12.7,374) rotate(-90)" font-size="14" text-anchor="middle" letter-spacing="0.9">TVD (ft)</text><text transform="translate(257.1,374) rotate(-90)" font-size="14" text-anchor="middle" letter-spacing="0.9">TVD (ft)</text><text x="413" y="152.6" font-size="13" text-anchor="end" letter-spacing="0.1" >Austin Chalk</text><text x="413" y="314.4" font-size="13" text-anchor="end" letter-spacing="0" >Upper Eagle Ford</text><text x="413" y="606.7" font-size="14" text-anchor="end" letter-spacing="0.35" >False Buda</text><text x="1502" y="41.7" font-size="13" text-anchor="start" letter-spacing="0.15" >Austin Chalk</text><text x="1502" y="203.6" font-size="13" text-anchor="start" letter-spacing="0" >Upper Eagle Ford</text><text x="1502" y="495.6" font-size="14" text-anchor="start" letter-spacing="0.35" >False Buda</text></g>
<rect x="0" y="788" width="1638" height="1" fill="#222426"/>
</svg>
</body></html>
